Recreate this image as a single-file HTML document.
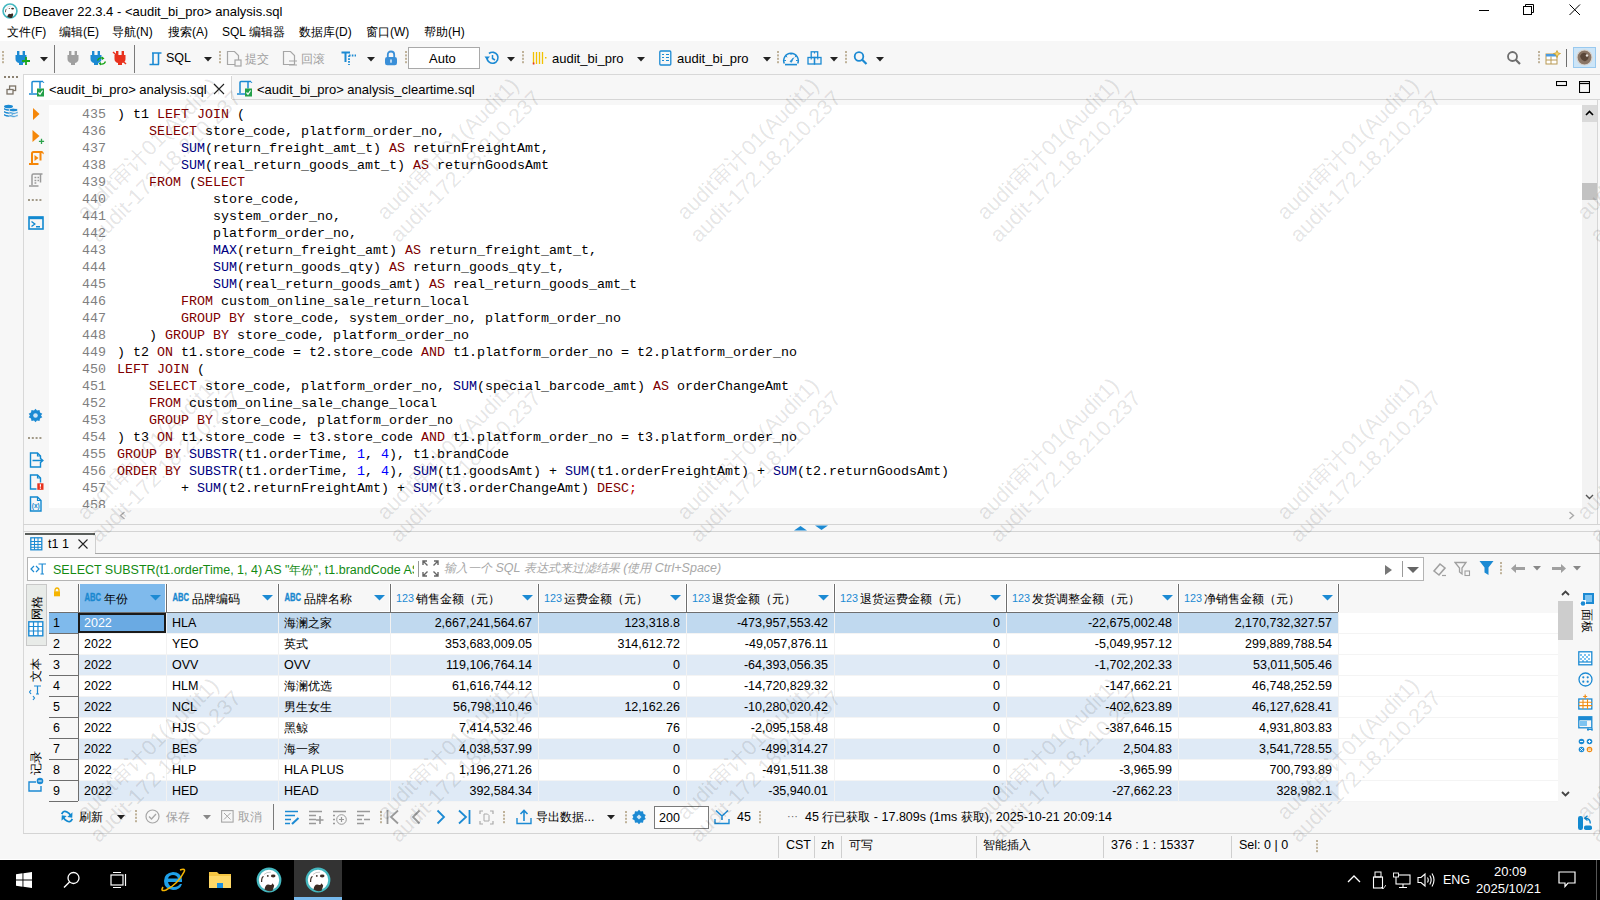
<!DOCTYPE html>
<html><head><meta charset="utf-8">
<style>
*{box-sizing:border-box}
html,body{margin:0;padding:0;width:1600px;height:900px;overflow:hidden;background:#f7f7f7;font-family:"Liberation Sans",sans-serif;font-size:12.5px;color:#000}
.a{position:absolute}
.t{position:absolute;white-space:nowrap;line-height:1}
.code{font-family:"Liberation Mono",monospace;font-size:13.33px;line-height:17px;white-space:pre;position:absolute}
.k{color:#800000}
.f{color:#000080}
.n{color:#0000ff}
</style></head><body>

<svg width="0" height="0" style="position:absolute"><defs>
<symbol id="plug" viewBox="0 0 16 16"><rect x="4" y="1" width="2.4" height="4"/><rect x="9.6" y="1" width="2.4" height="4"/><path d="M2.5 5H13.5V9Q13.5 12 10 13V15H6V13Q2.5 12 2.5 9Z"/></symbol>
<symbol id="doc" viewBox="0 0 16 16"><path d="M2.5 1.5H9.5L13.5 5.5V14.5H2.5Z" fill="none" stroke-width="1.2"/></symbol>
</defs></svg>
<div class="a" style="left:0px;top:0px;width:1600px;height:41px;background:#fff;"></div>
<svg class="a" style="left:2px;top:3px;" width="16" height="16" viewBox="0 0 16 16"><g transform="scale(0.6153846153846154)"><circle cx="13" cy="13" r="11.3" fill="#fff" stroke="#45b8c0" stroke-width="2.6"/><path d="M8.5 22.5Q9.5 16.5 13.5 17.8Q15.5 18.8 16.5 16.2L18.2 18.5Q17.5 21.5 16.5 23.8Q12.5 25.2 8.5 22.5Z" fill="#3a2a22"/><ellipse cx="17.2" cy="9" rx="2.3" ry="1.4" fill="#3a2a22"/><circle cx="11.8" cy="8.9" r="0.9" fill="#3a2a22"/><path d="M5.6 15Q5.5 10 7.6 9.5" fill="none" stroke="#3a2a22" stroke-width="1.2"/><path d="M8 7.5Q10.5 4.8 15 5.2" fill="none" stroke="#bbb" stroke-width="0.8"/></g></svg>
<div class="t" style="left:23px;top:5.00px;font-size:13px;color:#000;">DBeaver 22.3.4 - &lt;audit_bi_pro&gt; analysis.sql</div>
<svg class="a" style="left:1478px;top:4px;" width="12" height="12" viewBox="0 0 12 12"><path d="M1 6.5H11" stroke="#000" stroke-width="1"/></svg>
<svg class="a" style="left:1523px;top:4px;" width="12" height="12" viewBox="0 0 12 12"><rect x="0.5" y="2.5" width="8" height="8" fill="none" stroke="#000"/><path d="M2.5 2.5V0.5H10.5V8.5H8.5" fill="none" stroke="#000"/></svg>
<svg class="a" style="left:1569px;top:4px;" width="12" height="12" viewBox="0 0 12 12"><path d="M0.5 0.5L11 11M11 0.5L0.5 11" stroke="#000" stroke-width="1"/></svg>
<div class="t" style="left:7px;top:26.34px;font-size:12px;color:#000;">文件(F)</div>
<div class="t" style="left:59px;top:26.34px;font-size:12px;color:#000;">编辑(E)</div>
<div class="t" style="left:112px;top:26.34px;font-size:12px;color:#000;">导航(N)</div>
<div class="t" style="left:168px;top:26.34px;font-size:12px;color:#000;">搜索(A)</div>
<div class="t" style="left:222px;top:26.34px;font-size:12px;color:#000;">SQL 编辑器</div>
<div class="t" style="left:299px;top:26.34px;font-size:12px;color:#000;">数据库(D)</div>
<div class="t" style="left:366px;top:26.34px;font-size:12px;color:#000;">窗口(W)</div>
<div class="t" style="left:424px;top:26.34px;font-size:12px;color:#000;">帮助(H)</div>
<div class="a" style="left:0px;top:41px;width:1600px;height:33px;background:#f7f7f7;"></div>
<div class="a" style="left:23px;top:74px;width:1577px;height:1px;background:#d8d8d8;"></div>
<svg class="a" style="left:2px;top:51px;" width="2" height="14" viewBox="0 0 2 14"><rect x="0" y="0.0" width="2" height="2" fill="#bfb29a"/><rect x="0" y="3.4" width="2" height="2" fill="#bfb29a"/><rect x="0" y="6.8" width="2" height="2" fill="#bfb29a"/><rect x="0" y="10.2" width="2" height="2" fill="#bfb29a"/></svg>
<svg class="a" style="left:13px;top:50px;" width="16" height="16"><use href="#plug" fill="#1c8ad3"/></svg>
<svg class="a" style="left:21px;top:56px;" width="10" height="10" viewBox="0 0 10 10"><path d="M5 1V9M1 5H9" stroke="#1aa51a" stroke-width="1.8"/></svg>
<svg class="a" style="left:40px;top:57px;" width="8" height="5" viewBox="0 0 8 5"><path d="M0 0H8L4 4.5Z" fill="#222"/></svg>
<div class="a" style="left:54px;top:45px;width:1px;height:28px;background:#7a7a7a;"></div>
<svg class="a" style="left:65px;top:50px;" width="16" height="16"><use href="#plug" fill="#a0a0a0"/></svg>
<svg class="a" style="left:88px;top:50px;" width="16" height="16"><use href="#plug" fill="#1c8ad3"/></svg>
<svg class="a" style="left:96px;top:56px;" width="11" height="10" viewBox="0 0 11 10"><path d="M1.5 4.5Q3 1 7 2.2M9.5 5.5Q8 9 4 7.8" fill="none" stroke="#1aa51a" stroke-width="1.4"/><path d="M6 0.5L8.5 2.5L6 4Z M5 6L2.5 7.5L5 9.5Z" fill="#1aa51a"/></svg>
<svg class="a" style="left:112px;top:50px;" width="16" height="16"><use href="#plug" fill="#e8321e"/></svg>
<svg class="a" style="left:112px;top:51px;" width="15" height="14" viewBox="0 0 15 14"><path d="M1 1L14 13" stroke="#e8321e" stroke-width="1.4"/></svg>
<div class="a" style="left:134px;top:45px;width:1px;height:28px;background:#7a7a7a;"></div>
<svg class="a" style="left:148px;top:51px;" width="15" height="15" viewBox="0 0 15 15"><path d="M4 2H13.5M5 2V13.5M10.5 2V13.5M1.5 13.5H11" fill="none" stroke="#1c8ad3" stroke-width="1.6"/></svg>
<div class="t" style="left:166px;top:52.42px;font-size:12.5px;color:#000;">SQL</div>
<svg class="a" style="left:204px;top:57px;" width="8" height="5" viewBox="0 0 8 5"><path d="M0 0H8L4 4.5Z" fill="#222"/></svg>
<svg class="a" style="left:219px;top:51px;" width="2" height="14" viewBox="0 0 2 14"><rect x="0" y="0.0" width="2" height="2" fill="#bfb29a"/><rect x="0" y="3.4" width="2" height="2" fill="#bfb29a"/><rect x="0" y="6.8" width="2" height="2" fill="#bfb29a"/><rect x="0" y="10.2" width="2" height="2" fill="#bfb29a"/></svg>
<svg class="a" style="left:225px;top:50px;stroke:#a6a6a6" width="16" height="16"><use href="#doc"/></svg>
<svg class="a" style="left:234px;top:59px;" width="8" height="8" viewBox="0 0 8 8"><rect x="1" y="1" width="6" height="6" fill="#f7f7f7" stroke="#a6a6a6" stroke-width="1.2"/></svg>
<div class="t" style="left:245px;top:52.84px;font-size:12px;color:#a0a0a0;">提交</div>
<svg class="a" style="left:281px;top:50px;stroke:#a6a6a6" width="16" height="16"><use href="#doc"/></svg>
<svg class="a" style="left:288px;top:59px;" width="10" height="8" viewBox="0 0 10 8"><path d="M1 2H9M1 6H9" stroke="#a6a6a6" stroke-width="1.2"/></svg>
<div class="t" style="left:301px;top:52.84px;font-size:12px;color:#a0a0a0;">回滚</div>
<svg class="a" style="left:341px;top:51px;" width="16" height="15" viewBox="0 0 16 15"><path d="M0.5 1.5H9M4.5 1.5V11" stroke="#1c8ad3" stroke-width="2"/><path d="M8 4.5H15M8 4.5V14" stroke="#1c8ad3" stroke-width="1.8" stroke-dasharray="1.6 1.2"/></svg>
<svg class="a" style="left:367px;top:57px;" width="8" height="5" viewBox="0 0 8 5"><path d="M0 0H8L4 4.5Z" fill="#222"/></svg>
<svg class="a" style="left:384px;top:50px;" width="14" height="16" viewBox="0 0 14 16"><path d="M3.8 7.5V4.8Q3.8 1.5 7 1.5Q10.2 1.5 10.2 4.8V7.5" fill="none" stroke="#3a8fd8" stroke-width="1.8"/><rect x="1" y="7" width="12" height="8.2" rx="2.2" fill="#3a8fd8"/><rect x="6.2" y="9.5" width="1.6" height="3.2" fill="#d8eaf8"/></svg>
<svg class="a" style="left:405px;top:51px;" width="2" height="14" viewBox="0 0 2 14"><rect x="0" y="0.0" width="2" height="2" fill="#bfb29a"/><rect x="0" y="3.4" width="2" height="2" fill="#bfb29a"/><rect x="0" y="6.8" width="2" height="2" fill="#bfb29a"/><rect x="0" y="10.2" width="2" height="2" fill="#bfb29a"/></svg>
<div class="a" style="left:408px;top:47px;width:72px;height:22px;background:#fff;border:1px solid #a9a9a9"></div>
<div class="t" style="left:429px;top:52.00px;font-size:13px;color:#000;">Auto</div>
<svg class="a" style="left:484px;top:50px;" width="17" height="16" viewBox="0 0 17 16"><path d="M3 8A5.5 5.5 0 1 0 5 3.5" fill="none" stroke="#1c8ad3" stroke-width="1.7"/><path d="M0.5 6.5L3 10L6 6.5Z" fill="#1c8ad3"/><path d="M8.5 5V8.5L11 10" fill="none" stroke="#1c8ad3" stroke-width="1.5"/></svg>
<svg class="a" style="left:507px;top:57px;" width="8" height="5" viewBox="0 0 8 5"><path d="M0 0H8L4 4.5Z" fill="#222"/></svg>
<svg class="a" style="left:522px;top:51px;" width="2" height="14" viewBox="0 0 2 14"><rect x="0" y="0.0" width="2" height="2" fill="#bfb29a"/><rect x="0" y="3.4" width="2" height="2" fill="#bfb29a"/><rect x="0" y="6.8" width="2" height="2" fill="#bfb29a"/><rect x="0" y="10.2" width="2" height="2" fill="#bfb29a"/></svg>
<svg class="a" style="left:532px;top:50px;" width="16" height="16" viewBox="0 0 16 16"><path d="M1.5 2V14M4.5 2V14M7.5 2V14M10.5 2V14" stroke="#f2c200" stroke-width="1.3"/><rect x="0.8" y="12.5" width="1.6" height="2" fill="#e83020"/><rect x="13" y="7" width="1.5" height="1.5" fill="#f2c200"/></svg>
<div class="t" style="left:552px;top:52.00px;font-size:13px;color:#000;">audit_bi_pro</div>
<svg class="a" style="left:637px;top:57px;" width="8" height="5" viewBox="0 0 8 5"><path d="M0 0H8L4 4.5Z" fill="#222"/></svg>
<svg class="a" style="left:659px;top:50px;" width="13" height="16" viewBox="0 0 13 16"><rect x="0.8" y="1" width="11" height="14" rx="1" fill="none" stroke="#1c8ad3" stroke-width="1.3"/><path d="M3 4.5H5M7 4.5H10M3 7.5H5M7 7.5H10M3 10.5H5M7 10.5H10" stroke="#1c8ad3" stroke-width="1.2"/></svg>
<div class="t" style="left:677px;top:52.00px;font-size:13px;color:#000;">audit_bi_pro</div>
<svg class="a" style="left:763px;top:57px;" width="8" height="5" viewBox="0 0 8 5"><path d="M0 0H8L4 4.5Z" fill="#222"/></svg>
<svg class="a" style="left:777px;top:51px;" width="2" height="14" viewBox="0 0 2 14"><rect x="0" y="0.0" width="2" height="2" fill="#bfb29a"/><rect x="0" y="3.4" width="2" height="2" fill="#bfb29a"/><rect x="0" y="6.8" width="2" height="2" fill="#bfb29a"/><rect x="0" y="10.2" width="2" height="2" fill="#bfb29a"/></svg>
<svg class="a" style="left:782px;top:51px;" width="18" height="15" viewBox="0 0 18 15"><path d="M2.3 12.5A7.3 7.3 0 1 1 15.7 12.5" fill="none" stroke="#1c8ad3" stroke-width="1.5"/><path d="M3 13.6H15" stroke="#1c8ad3" stroke-width="1.6"/><path d="M9 2V4M3.8 5L5.2 6.2M14.2 5L12.8 6.2M2.2 9.5H4M14 9.5H15.8" stroke="#1c8ad3" stroke-width="1"/><path d="M8 10.5L11.5 6.8L9.5 11.2Z" fill="#1c8ad3" stroke="#1c8ad3" stroke-width="0.8"/></svg>
<svg class="a" style="left:807px;top:51px;" width="15" height="14" viewBox="0 0 15 14"><rect x="4.2" y="0.8" width="6.5" height="5.7" fill="none" stroke="#1c8ad3" stroke-width="1.3"/><rect x="1" y="6.5" width="6.5" height="6.5" fill="none" stroke="#1c8ad3" stroke-width="1.3"/><rect x="7.5" y="6.5" width="6.5" height="6.5" fill="none" stroke="#1c8ad3" stroke-width="1.3"/><path d="M7.5 1V2.5M4.2 7V8.5M10.8 7V8.5" stroke="#1c8ad3" stroke-width="1.1"/></svg>
<svg class="a" style="left:830px;top:57px;" width="8" height="5" viewBox="0 0 8 5"><path d="M0 0H8L4 4.5Z" fill="#222"/></svg>
<svg class="a" style="left:845px;top:51px;" width="2" height="14" viewBox="0 0 2 14"><rect x="0" y="0.0" width="2" height="2" fill="#bfb29a"/><rect x="0" y="3.4" width="2" height="2" fill="#bfb29a"/><rect x="0" y="6.8" width="2" height="2" fill="#bfb29a"/><rect x="0" y="10.2" width="2" height="2" fill="#bfb29a"/></svg>
<svg class="a" style="left:853px;top:50px;" width="15" height="16" viewBox="0 0 15 16"><circle cx="6" cy="6.5" r="4.3" fill="none" stroke="#1c8ad3" stroke-width="1.8"/><path d="M9 9.5L13.5 14" stroke="#1c8ad3" stroke-width="2.2"/></svg>
<svg class="a" style="left:876px;top:57px;" width="8" height="5" viewBox="0 0 8 5"><path d="M0 0H8L4 4.5Z" fill="#222"/></svg>
<svg class="a" style="left:1506px;top:50px;" width="16" height="16" viewBox="0 0 16 16"><circle cx="6.5" cy="6.5" r="4.5" fill="none" stroke="#6e6e6e" stroke-width="1.8"/><path d="M9.5 9.5L14 14" stroke="#6e6e6e" stroke-width="2.2"/></svg>
<svg class="a" style="left:1538px;top:51px;" width="2" height="14" viewBox="0 0 2 14"><rect x="0" y="0.0" width="2" height="2" fill="#bfb29a"/><rect x="0" y="3.4" width="2" height="2" fill="#bfb29a"/><rect x="0" y="6.8" width="2" height="2" fill="#bfb29a"/><rect x="0" y="10.2" width="2" height="2" fill="#bfb29a"/></svg>
<svg class="a" style="left:1545px;top:50px;" width="16" height="16" viewBox="0 0 16 16"><rect x="1" y="4" width="11" height="10" fill="#fff" stroke="#b99a54" stroke-width="1"/><rect x="1" y="4" width="11" height="2.5" fill="#4b9be0"/><path d="M6 6.5V14M1 10H12" stroke="#b99a54"/><path d="M12 0.5L13.2 3L15.5 3.5L13.2 4.8L12 7.5L10.8 4.8L8.5 3.5L10.8 3Z" fill="#f5d26a" stroke="#c49a22" stroke-width="0.7"/></svg>
<div class="a" style="left:1566px;top:49px;width:1px;height:18px;background:#6e6e6e;"></div>
<div class="a" style="left:1573px;top:47px;width:23px;height:21px;background:#cde5f7;border:1px solid #99c9ef"></div>
<svg class="a" style="left:1576px;top:49px;" width="17" height="17" viewBox="0 0 17 17"><circle cx="8.5" cy="8.5" r="7.5" fill="#8a7565"/><circle cx="8.5" cy="8.5" r="7.5" fill="none" stroke="#d9d2cc" stroke-width="1.2"/><path d="M4 7Q6 3 9 4Q13 5 12.5 9Q11 13 8 12Q5 11 4 7Z" fill="#5a4638"/><circle cx="11" cy="6.5" r="1.2" fill="#e8e0da"/></svg>
<div class="a" style="left:23px;top:75px;width:1577px;height:24px;background:#f7f7f7;"></div>
<div class="a" style="left:23px;top:99px;width:1577px;height:1px;background:#d6d6d6;"></div>
<div class="a" style="left:24px;top:75px;width:208px;height:25px;background:#ffffff;"></div>
<div class="a" style="left:231px;top:76px;width:1px;height:23px;background:#d6d6d6;"></div>
<svg class="a" style="left:28px;top:80px;" width="17" height="17" viewBox="0 0 17 17"><path d="M4 13V2.5Q4 1.5 5 1.5H15M1 14H10M12 1.5V8.5" fill="none" stroke="#1c8ad3" stroke-width="1.5"/><path d="M15 1.5Q16 2 15.5 3" fill="none" stroke="#1c8ad3" stroke-width="1"/><rect x="9" y="8.5" width="7" height="8" fill="#23a048"/><path d="M10.5 12.5L12 14.3L14.6 10.5" fill="none" stroke="#fff" stroke-width="1.2"/></svg>
<div class="t" style="left:49px;top:82.50px;font-size:13px;color:#000;">&lt;audit_bi_pro&gt; analysis.sql</div>
<svg class="a" style="left:213px;top:83px;" width="12" height="12" viewBox="0 0 12 12"><path d="M1 1L11 11M11 1L1 11" stroke="#222" stroke-width="1.1"/></svg>
<svg class="a" style="left:236px;top:80px;" width="17" height="17" viewBox="0 0 17 17"><path d="M4 13V2.5Q4 1.5 5 1.5H15M1 14H10M12 1.5V8.5" fill="none" stroke="#1c8ad3" stroke-width="1.5"/><path d="M15 1.5Q16 2 15.5 3" fill="none" stroke="#1c8ad3" stroke-width="1"/><rect x="9" y="8.5" width="7" height="8" fill="#23a048"/><path d="M10.5 12.5L12 14.3L14.6 10.5" fill="none" stroke="#fff" stroke-width="1.2"/></svg>
<div class="t" style="left:257px;top:82.50px;font-size:13px;color:#000;">&lt;audit_bi_pro&gt; analysis_cleartime.sql</div>
<svg class="a" style="left:1556px;top:81px;" width="11" height="6" viewBox="0 0 11 6"><rect x="0.5" y="0.5" width="10" height="4" fill="none" stroke="#000" stroke-width="1.1"/></svg>
<svg class="a" style="left:1579px;top:81px;" width="11" height="12" viewBox="0 0 11 12"><rect x="0.5" y="0.5" width="10" height="11" fill="none" stroke="#000" stroke-width="1.1"/><path d="M0.5 2.5H10.5" stroke="#000" stroke-width="1.2"/></svg>
<div class="a" style="left:0px;top:75px;width:23px;height:784px;background:#f7f7f7;"></div>
<div class="a" style="left:23px;top:74px;width:1px;height:760px;background:#d8d8d8;"></div>
<svg class="a" style="left:4px;top:76px;" width="16" height="3" viewBox="0 0 16 3"><rect x="0" y="0" width="2" height="2" fill="#8a8070"/><rect x="4" y="0" width="2" height="2" fill="#8a8070"/><rect x="8" y="0" width="2" height="2" fill="#8a8070"/><rect x="12" y="0" width="2" height="2" fill="#8a8070"/></svg>
<svg class="a" style="left:6px;top:85px;" width="11" height="10" viewBox="0 0 11 10"><rect x="3.6" y="1" width="6" height="4.5" fill="none" stroke="#7d7468" stroke-width="1.3"/><rect x="1" y="4.5" width="6" height="4.5" fill="#f7f7f7" stroke="#7d7468" stroke-width="1.3"/></svg>
<svg class="a" style="left:3px;top:104px;" width="16" height="16" viewBox="0 0 16 16"><ellipse cx="5.5" cy="2.5" rx="4.5" ry="1.8" fill="#1c8ad3"/><path d="M1 4V5.5Q5.5 8 10 5.5V4Q5.5 6.5 1 4ZM1 7V8.5Q5.5 11 10 8.5V7Q5.5 9.5 1 7ZM1 10V11.5Q5.5 14 10 11.5V10Q5.5 12.5 1 10Z" fill="#1c8ad3"/><ellipse cx="10.5" cy="6" rx="4.5" ry="1.8" fill="#1c8ad3" stroke="#f7f7f7" stroke-width="0.8"/><path d="M6 7.5V9Q10.5 11.5 15 9V7.5Q10.5 10 6 7.5ZM6 10.5V12Q10.5 14.5 15 12V10.5Q10.5 13 6 10.5Z" fill="#1c8ad3" stroke="#f7f7f7" stroke-width="0.6"/></svg>
<div class="a" style="left:24px;top:100px;width:1574px;height:424px;background:#f7f7f7;"></div>
<div class="a" style="left:49px;top:105px;width:1533px;height:403px;background:#fff;"></div>
<svg class="a" style="left:32px;top:107px;" width="9" height="14" viewBox="0 0 9 14"><path d="M1 1L7.5 7L1 13Z" fill="#f5870a"/></svg>
<svg class="a" style="left:31px;top:129px;" width="14" height="16" viewBox="0 0 14 16"><path d="M1.5 1L8.5 7L1.5 13Z" fill="#f5870a"/><path d="M10.5 9.8V15M7.9 12.4H13.1" stroke="#2aa24a" stroke-width="1.3"/></svg>
<svg class="a" style="left:28px;top:150px;" width="16" height="16" viewBox="0 0 16 16"><path d="M4 13V3.5Q4 2 5.5 2H14.5M1 14H10.5M12.5 2V10.5" fill="none" stroke="#f5870a" stroke-width="2"/><path d="M14 2Q15.5 2.5 15 4" fill="none" stroke="#f5870a" stroke-width="1.2"/><path d="M6.5 5L10.5 8L6.5 11Z" fill="#f5870a"/></svg>
<svg class="a" style="left:28px;top:172px;" width="16" height="16" viewBox="0 0 16 16"><path d="M4 13V3.5Q4 2 5.5 2H14.5M1 14H10.5M12.5 2V10.5" fill="none" stroke="#9a9a9a" stroke-width="1.5"/><path d="M6.5 5.5H8.3M9.5 5.5H11M6.5 8.5H8.3M9.5 8.5H11M6.5 11H8.3" stroke="#9a9a9a" stroke-width="1.3"/></svg>
<svg class="a" style="left:27px;top:199px;" width="17" height="3" viewBox="0 0 17 3"><rect x="1.0" y="0" width="2" height="2" fill="#a29a88"/><rect x="4.8" y="0" width="2" height="2" fill="#a29a88"/><rect x="8.6" y="0" width="2" height="2" fill="#a29a88"/><rect x="12.399999999999999" y="0" width="2" height="2" fill="#a29a88"/></svg>
<svg class="a" style="left:28px;top:216px;" width="16" height="14" viewBox="0 0 16 14"><rect x="1" y="1" width="14" height="12" fill="none" stroke="#1289d0" stroke-width="1.6"/><path d="M1 2H15" stroke="#1289d0" stroke-width="2.4"/><path d="M3.5 5.5L6.8 8L3.5 10.5M8 10.8H12" fill="none" stroke="#1289d0" stroke-width="1.4"/></svg>
<svg class="a" style="left:28px;top:408px;" width="15" height="15" viewBox="0 0 15 15"><path d="M7.5 0.8L9 2.5L11.5 2L12 4.5L14.3 5.8L13 7.5L14.3 9.2L12 10.5L11.5 13L9 12.5L7.5 14.2L6 12.5L3.5 13L3 10.5L0.7 9.2L2 7.5L0.7 5.8L3 4.5L3.5 2L6 2.5Z" fill="#1c8ad3"/><circle cx="7.5" cy="7.5" r="2.3" fill="#cfe6f7"/></svg>
<svg class="a" style="left:27px;top:437px;" width="17" height="3" viewBox="0 0 17 3"><rect x="1.0" y="0" width="2" height="2" fill="#a29a88"/><rect x="4.8" y="0" width="2" height="2" fill="#a29a88"/><rect x="8.6" y="0" width="2" height="2" fill="#a29a88"/><rect x="12.399999999999999" y="0" width="2" height="2" fill="#a29a88"/></svg>
<svg class="a" style="left:29px;top:452px;" width="15" height="16" viewBox="0 0 15 16"><path d="M11.5 6V4L8.5 1H1.5V15H11.5V11" fill="none" stroke="#1289d0" stroke-width="1.4"/><path d="M8.5 1V4H11.5" fill="none" stroke="#1289d0" stroke-width="1.2"/><path d="M3.5 8.5H13.8M11 6L13.8 8.5L11 11" fill="none" stroke="#1289d0" stroke-width="1.5"/></svg>
<svg class="a" style="left:29px;top:474px;" width="15" height="16" viewBox="0 0 15 16"><path d="M7.5 15H1.5V1H8.5L11.5 4V8.5" fill="none" stroke="#1289d0" stroke-width="1.4"/><path d="M8.5 1V4H11.5" fill="none" stroke="#1289d0" stroke-width="1.2"/><rect x="8.3" y="9.3" width="6.2" height="6.5" fill="#e8321e"/><path d="M11.4 10.3V12.8M11.4 13.6V14.8" stroke="#fff" stroke-width="1.2"/></svg>
<svg class="a" style="left:29px;top:496px;" width="15" height="16" viewBox="0 0 15 16"><path d="M1.5 1H8.5L12 4.5V15H1.5Z" fill="none" stroke="#1289d0" stroke-width="1.4"/><path d="M8.5 1V4.5H12" fill="none" stroke="#1289d0" stroke-width="1.2"/><text x="6.8" y="11.5" font-size="6.5" font-weight="bold" text-anchor="middle" fill="#1289d0" font-family="Liberation Sans">(x)</text></svg>
<div class="code" style="left:117px;top:106px;color:#000">) t1 <span class="k">LEFT</span> <span class="k">JOIN</span> (
    <span class="k">SELECT</span> store_code, platform_order_no,
        <span class="f">SUM</span>(return_freight_amt_t) <span class="k">AS</span> returnFreightAmt,
        <span class="f">SUM</span>(real_return_goods_amt_t) <span class="k">AS</span> returnGoodsAmt
    <span class="k">FROM</span> (<span class="k">SELECT</span>
            store_code,
            system_order_no,
            platform_order_no,
            <span class="f">MAX</span>(return_freight_amt) <span class="k">AS</span> return_freight_amt_t,
            <span class="f">SUM</span>(return_goods_qty) <span class="k">AS</span> return_goods_qty_t,
            <span class="f">SUM</span>(real_return_goods_amt) <span class="k">AS</span> real_return_goods_amt_t
        <span class="k">FROM</span> custom_online_sale_return_local
        <span class="k">GROUP</span> <span class="k">BY</span> store_code, system_order_no, platform_order_no
    ) <span class="k">GROUP</span> <span class="k">BY</span> store_code, platform_order_no
) t2 <span class="k">ON</span> t1.store_code = t2.store_code <span class="k">AND</span> t1.platform_order_no = t2.platform_order_no
<span class="k">LEFT</span> <span class="k">JOIN</span> (
    <span class="k">SELECT</span> store_code, platform_order_no, <span class="f">SUM</span>(special_barcode_amt) <span class="k">AS</span> orderChangeAmt
    <span class="k">FROM</span> custom_online_sale_change_local
    <span class="k">GROUP</span> <span class="k">BY</span> store_code, platform_order_no
) t3 <span class="k">ON</span> t1.store_code = t3.store_code <span class="k">AND</span> t1.platform_order_no = t3.platform_order_no
<span class="k">GROUP</span> <span class="k">BY</span> <span class="f">SUBSTR</span>(t1.orderTime, <span class="n">1</span>, <span class="n">4</span>), t1.brandCode
<span class="k">ORDER</span> <span class="k">BY</span> <span class="f">SUBSTR</span>(t1.orderTime, <span class="n">1</span>, <span class="n">4</span>), <span class="f">SUM</span>(t1.goodsAmt) + <span class="f">SUM</span>(t1.orderFreightAmt) + <span class="f">SUM</span>(t2.returnGoodsAmt)
        + <span class="f">SUM</span>(t2.returnFreightAmt) + <span class="f">SUM</span>(t3.orderChangeAmt) <span class="k">DESC</span><span class="k" style="font-weight:normal;color:#c00000">;</span></div>
<div class="code" style="left:82px;top:106px;color:#808080;height:405px;overflow:hidden">435
436
437
438
439
440
441
442
443
444
445
446
447
448
449
450
451
452
453
454
455
456
457
458</div>
<div class="a" style="left:1582px;top:105px;width:15px;height:403px;background:#f3f3f3;"></div>
<div class="a" style="left:1582px;top:105px;width:15px;height:17px;background:#dadada;"></div>
<svg class="a" style="left:1585px;top:110px;" width="9" height="6" viewBox="0 0 9 6"><path d="M1 5L4.5 1.5L8 5" fill="none" stroke="#000" stroke-width="1.6"/></svg>
<div class="a" style="left:1582px;top:183px;width:15px;height:17px;background:#c2c2c2;"></div>
<svg class="a" style="left:1585px;top:494px;" width="9" height="6" viewBox="0 0 9 6"><path d="M1 1L4.5 4.5L8 1" fill="none" stroke="#555" stroke-width="1.4"/></svg>
<div class="a" style="left:1597px;top:100px;width:1px;height:424px;background:#d6d6d6;"></div>
<div class="a" style="left:49px;top:508px;width:1533px;height:16px;background:#f7f7f7;"></div>
<svg class="a" style="left:119px;top:511px;" width="7" height="9" viewBox="0 0 7 9"><path d="M5.5 1L1.5 4.5L5.5 8" fill="none" stroke="#aaa" stroke-width="1.4"/></svg>
<svg class="a" style="left:1568px;top:511px;" width="7" height="9" viewBox="0 0 7 9"><path d="M1.5 1L5.5 4.5L1.5 8" fill="none" stroke="#aaa" stroke-width="1.4"/></svg>
<div class="a" style="left:23px;top:524px;width:1577px;height:1px;background:#d4d4d4;"></div>
<div class="a" style="left:23px;top:531px;width:1577px;height:1px;background:#d4d4d4;"></div>
<svg class="a" style="left:794px;top:526px;" width="13" height="5" viewBox="0 0 13 5"><path d="M0 4.5L6.5 0L13 4.5Z" fill="#1c8ad3"/></svg>
<svg class="a" style="left:815px;top:525px;" width="13" height="6" viewBox="0 0 13 6"><path d="M0 0.5H13L6.5 5Z" fill="#1c8ad3"/></svg>
<div class="a" style="left:24px;top:533px;width:1576px;height:300px;background:#f7f7f7;"></div>
<div class="a" style="left:23px;top:833px;width:1577px;height:1px;background:#d4d4d4;"></div>
<div class="a" style="left:1599px;top:531px;width:1px;height:302px;background:#d4d4d4;"></div>
<div class="a" style="left:25px;top:533px;width:70px;height:21px;background:#f7f7f7;"></div>
<div class="a" style="left:25px;top:533px;width:70px;height:2px;background:#5a5e5b;"></div>
<div class="a" style="left:95px;top:535px;width:1px;height:19px;background:#cfcfcf;"></div>
<div class="a" style="left:95px;top:553px;width:1505px;height:1px;background:#a8a8a8;"></div>
<svg class="a" style="left:30px;top:537px;" width="13" height="14" viewBox="0 0 13 14"><rect x="0.8" y="0.8" width="11" height="12" fill="none" stroke="#1c8ad3" stroke-width="1.3"/><path d="M0.8 4.5H11.8M0.8 7.5H11.8M0.8 10.3H11.8M4.5 0.8V12.8M8 0.8V12.8" stroke="#1c8ad3" stroke-width="1"/></svg>
<div class="t" style="left:48px;top:538.42px;font-size:12.5px;color:#000;">t1 1</div>
<svg class="a" style="left:78px;top:539px;" width="10" height="10" viewBox="0 0 10 10"><path d="M0.5 0.5L9.5 9.5M9.5 0.5L0.5 9.5" stroke="#222" stroke-width="1.1"/></svg>
<div class="a" style="left:27px;top:557px;width:1397px;height:24px;background:#fff;border:1px solid #b4b4b4"></div>
<svg class="a" style="left:30px;top:563px;" width="17" height="12" viewBox="0 0 17 12"><path d="M4 3L1 6L4 9M6 3L9 6L6 9" fill="none" stroke="#1c8ad3" stroke-width="1.2"/><path d="M8.5 1H16M12.2 1V11M10.5 11H14" stroke="#1c8ad3" stroke-width="1.2"/></svg>
<div class="a" style="left:52px;top:559px;width:362px;height:20px;overflow:hidden">
<div class="t" style="left:1px;top:4.92px;font-size:12.5px;color:#138a13;">SELECT SUBSTR(t1.orderTime, 1, 4) AS &quot;<span style="font-size:12px">年份</span>&quot;, t1.brandCode AS &quot;<span style="font-size:12px">品牌编码</span>&quot;</div>
</div>
<div class="a" style="left:418px;top:561px;width:1px;height:16px;background:#9a9a9a;"></div>
<svg class="a" style="left:422px;top:560px;" width="17" height="17" viewBox="0 0 17 17"><path d="M1 5V1H5M12 1H16V5M16 12V16H12M5 16H1V12M1 1L5.5 5.5M16 1L11.5 5.5M16 16L11.5 11.5M1 16L5.5 11.5" fill="none" stroke="#666" stroke-width="1.4"/></svg>
<div class="t" style="left:444px;top:562.42px;font-size:12.5px;color:#a8a8a8;font-style:italic"><span style="font-size:12px">输入一个</span> SQL <span style="font-size:12px">表达式来过滤结果</span> (<span style="font-size:12px">使用</span> Ctrl+Space)</div>
<svg class="a" style="left:1384px;top:564px;" width="9" height="12" viewBox="0 0 9 12"><path d="M1 1L8 6L1 11Z" fill="#777"/></svg>
<div class="a" style="left:1402px;top:561px;width:1px;height:16px;background:#9a9a9a;"></div>
<svg class="a" style="left:1407px;top:567px;" width="12" height="6" viewBox="0 0 12 6"><path d="M0 0H12L6 6Z" fill="#666"/></svg>
<svg class="a" style="left:1432px;top:561px;" width="16" height="16" viewBox="0 0 16 16"><path d="M2 10L8 3L13 7L7 14Z" fill="none" stroke="#a0a0a0" stroke-width="1.6"/><path d="M10 14.5H14" stroke="#a0a0a0" stroke-width="1.2"/></svg>
<svg class="a" style="left:1454px;top:561px;" width="17" height="16" viewBox="0 0 17 16"><path d="M1 1.5H12L8 7V13L5.5 11V7Z" fill="none" stroke="#a0a0a0" stroke-width="1.3"/><rect x="11" y="10" width="4.5" height="4.5" fill="none" stroke="#a0a0a0" stroke-width="1.1"/></svg>
<svg class="a" style="left:1479px;top:560px;" width="15" height="16" viewBox="0 0 15 16"><path d="M0.5 1H14.5L9.5 7.5V15L5.5 12.5V7.5Z" fill="#1c8ad3"/></svg>
<svg class="a" style="left:1500px;top:562px;" width="2" height="14" viewBox="0 0 2 14"><rect x="0" y="0.0" width="2" height="2" fill="#bfb29a"/><rect x="0" y="3.4" width="2" height="2" fill="#bfb29a"/><rect x="0" y="6.8" width="2" height="2" fill="#bfb29a"/><rect x="0" y="10.2" width="2" height="2" fill="#bfb29a"/></svg>
<svg class="a" style="left:1510px;top:563px;" width="16" height="11" viewBox="0 0 16 11"><path d="M1 5.5L6 1V4H15V7H6V10Z" fill="#a0a0a0"/></svg>
<svg class="a" style="left:1533px;top:566px;" width="8" height="5" viewBox="0 0 8 5"><path d="M0 0H8L4 4.5Z" fill="#888"/></svg>
<svg class="a" style="left:1551px;top:563px;" width="16" height="11" viewBox="0 0 16 11"><path d="M15 5.5L10 1V4H1V7H10V10Z" fill="#a0a0a0"/></svg>
<svg class="a" style="left:1573px;top:566px;" width="8" height="5" viewBox="0 0 8 5"><path d="M0 0H8L4 4.5Z" fill="#888"/></svg>
<div class="a" style="left:26px;top:584px;width:21px;height:62px;background:#e8ebe8;border:1px solid #c8c8c8"></div>
<div class="t" style="left:25px;top:602px;width:24px;font-size:12px;transform:rotate(-90deg);text-align:center">网格</div>
<svg class="a" style="left:28px;top:621px;" width="16" height="16" viewBox="0 0 16 16"><rect x="0.8" y="0.8" width="14" height="14" fill="#fff" stroke="#1c8ad3" stroke-width="1.4"/><path d="M0.8 5.5H14.8M0.8 10H14.8M5.5 0.8V14.8M10 0.8V14.8" stroke="#1c8ad3" stroke-width="1.2"/></svg>
<div class="t" style="left:24px;top:664px;width:24px;font-size:12px;transform:rotate(-90deg);text-align:center">文本</div>
<svg class="a" style="left:29px;top:684px;" width="14" height="17" viewBox="0 0 14 17"><path d="M5 2H12M8.5 2V10M7 10H10" stroke="#1c8ad3" stroke-width="1.2" fill="none"/><path d="M2 6L0.5 8L2 10M4 12L5.5 14L4 16" fill="none" stroke="#1c8ad3" stroke-width="1.2"/></svg>
<div class="t" style="left:24px;top:757px;width:24px;font-size:12px;transform:rotate(-90deg);text-align:center">记录</div>
<svg class="a" style="left:28px;top:777px;" width="16" height="16" viewBox="0 0 16 16"><path d="M8 5H1V14H13V9" fill="none" stroke="#1c8ad3" stroke-width="1.4"/><circle cx="12" cy="4" r="3.3" fill="#1c8ad3"/><path d="M10.3 4H13.7" stroke="#fff" stroke-width="1"/></svg>
<div class="a" style="left:49px;top:584px;width:1509px;height:217px;background:#fff;"></div>
<div class="a" style="left:49px;top:584px;width:1509px;height:29px;background:#f7f7f7;"></div>
<div class="a" style="left:49px;top:611px;width:1289px;height:1px;background:#ffffff;"></div>
<div class="a" style="left:78px;top:584px;width:88px;height:28px;background:#7fbaec;"></div>
<div class="a" style="left:49px;top:612px;width:1289px;height:1px;background:#6e6e6e;"></div>
<div class="a" style="left:79px;top:584px;width:1px;height:28px;background:#ffffff;"></div>
<div class="a" style="left:78px;top:584px;width:1px;height:28px;background:#6e6e6e;"></div>
<div class="a" style="left:167px;top:584px;width:1px;height:28px;background:#ffffff;"></div>
<div class="a" style="left:165px;top:584px;width:1px;height:28px;background:#ffffff;"></div>
<div class="a" style="left:166px;top:584px;width:1px;height:28px;background:#6e6e6e;"></div>
<div class="a" style="left:279px;top:584px;width:1px;height:28px;background:#ffffff;"></div>
<div class="a" style="left:277px;top:584px;width:1px;height:28px;background:#ffffff;"></div>
<div class="a" style="left:278px;top:584px;width:1px;height:28px;background:#6e6e6e;"></div>
<div class="a" style="left:391px;top:584px;width:1px;height:28px;background:#ffffff;"></div>
<div class="a" style="left:389px;top:584px;width:1px;height:28px;background:#ffffff;"></div>
<div class="a" style="left:390px;top:584px;width:1px;height:28px;background:#6e6e6e;"></div>
<div class="a" style="left:539px;top:584px;width:1px;height:28px;background:#ffffff;"></div>
<div class="a" style="left:537px;top:584px;width:1px;height:28px;background:#ffffff;"></div>
<div class="a" style="left:538px;top:584px;width:1px;height:28px;background:#6e6e6e;"></div>
<div class="a" style="left:687px;top:584px;width:1px;height:28px;background:#ffffff;"></div>
<div class="a" style="left:685px;top:584px;width:1px;height:28px;background:#ffffff;"></div>
<div class="a" style="left:686px;top:584px;width:1px;height:28px;background:#6e6e6e;"></div>
<div class="a" style="left:835px;top:584px;width:1px;height:28px;background:#ffffff;"></div>
<div class="a" style="left:833px;top:584px;width:1px;height:28px;background:#ffffff;"></div>
<div class="a" style="left:834px;top:584px;width:1px;height:28px;background:#6e6e6e;"></div>
<div class="a" style="left:1007px;top:584px;width:1px;height:28px;background:#ffffff;"></div>
<div class="a" style="left:1005px;top:584px;width:1px;height:28px;background:#ffffff;"></div>
<div class="a" style="left:1006px;top:584px;width:1px;height:28px;background:#6e6e6e;"></div>
<div class="a" style="left:1179px;top:584px;width:1px;height:28px;background:#ffffff;"></div>
<div class="a" style="left:1177px;top:584px;width:1px;height:28px;background:#ffffff;"></div>
<div class="a" style="left:1178px;top:584px;width:1px;height:28px;background:#6e6e6e;"></div>
<div class="a" style="left:1339px;top:584px;width:1px;height:28px;background:#ffffff;"></div>
<div class="a" style="left:1337px;top:584px;width:1px;height:28px;background:#ffffff;"></div>
<div class="a" style="left:1338px;top:584px;width:1px;height:28px;background:#6e6e6e;"></div>
<svg class="a" style="left:53px;top:587px;" width="8" height="10" viewBox="0 0 8 10"><path d="M2 4.5V3.3Q2 1 4 1Q6 1 6 3.3V4.5" fill="none" stroke="#f5b400" stroke-width="1.3"/><rect x="1" y="4.3" width="6" height="5" fill="#f5b400"/></svg>
<svg class="a" style="left:84px;top:591px;" width="18" height="11" viewBox="0 0 18 11"><text x="0.5" y="9.5" font-family="Liberation Sans" font-size="10.5" font-weight="bold" fill="#1a88d0" stroke="#1a88d0" stroke-width="0.35" textLength="16.5" lengthAdjust="spacingAndGlyphs">ABC</text></svg>
<div class="t" style="left:104px;top:592.92px;font-size:12.5px;color:#000;"><span style="font-size:12px">年份</span></div>
<svg class="a" style="left:150px;top:595px;" width="11" height="6" viewBox="0 0 11 6"><path d="M0 0H11L5.5 5.5Z" fill="#1c8ad3"/></svg>
<svg class="a" style="left:172px;top:591px;" width="18" height="11" viewBox="0 0 18 11"><text x="0.5" y="9.5" font-family="Liberation Sans" font-size="10.5" font-weight="bold" fill="#1a88d0" stroke="#1a88d0" stroke-width="0.35" textLength="16.5" lengthAdjust="spacingAndGlyphs">ABC</text></svg>
<div class="t" style="left:192px;top:592.92px;font-size:12.5px;color:#000;"><span style="font-size:12px">品牌编码</span></div>
<svg class="a" style="left:262px;top:595px;" width="11" height="6" viewBox="0 0 11 6"><path d="M0 0H11L5.5 5.5Z" fill="#1c8ad3"/></svg>
<svg class="a" style="left:284px;top:591px;" width="18" height="11" viewBox="0 0 18 11"><text x="0.5" y="9.5" font-family="Liberation Sans" font-size="10.5" font-weight="bold" fill="#1a88d0" stroke="#1a88d0" stroke-width="0.35" textLength="16.5" lengthAdjust="spacingAndGlyphs">ABC</text></svg>
<div class="t" style="left:304px;top:592.92px;font-size:12.5px;color:#000;"><span style="font-size:12px">品牌名称</span></div>
<svg class="a" style="left:374px;top:595px;" width="11" height="6" viewBox="0 0 11 6"><path d="M0 0H11L5.5 5.5Z" fill="#1c8ad3"/></svg>
<div class="t" style="left:396px;top:592.86px;font-size:10.8px;color:#1c8ad3;">123</div>
<div class="t" style="left:416px;top:592.92px;font-size:12.5px;color:#000;"><span style="font-size:12px">销售金额（元）</span></div>
<svg class="a" style="left:522px;top:595px;" width="11" height="6" viewBox="0 0 11 6"><path d="M0 0H11L5.5 5.5Z" fill="#1c8ad3"/></svg>
<div class="t" style="left:544px;top:592.86px;font-size:10.8px;color:#1c8ad3;">123</div>
<div class="t" style="left:564px;top:592.92px;font-size:12.5px;color:#000;"><span style="font-size:12px">运费金额（元）</span></div>
<svg class="a" style="left:670px;top:595px;" width="11" height="6" viewBox="0 0 11 6"><path d="M0 0H11L5.5 5.5Z" fill="#1c8ad3"/></svg>
<div class="t" style="left:692px;top:592.86px;font-size:10.8px;color:#1c8ad3;">123</div>
<div class="t" style="left:712px;top:592.92px;font-size:12.5px;color:#000;"><span style="font-size:12px">退货金额（元）</span></div>
<svg class="a" style="left:818px;top:595px;" width="11" height="6" viewBox="0 0 11 6"><path d="M0 0H11L5.5 5.5Z" fill="#1c8ad3"/></svg>
<div class="t" style="left:840px;top:592.86px;font-size:10.8px;color:#1c8ad3;">123</div>
<div class="t" style="left:860px;top:592.92px;font-size:12.5px;color:#000;"><span style="font-size:12px">退货运费金额（元）</span></div>
<svg class="a" style="left:990px;top:595px;" width="11" height="6" viewBox="0 0 11 6"><path d="M0 0H11L5.5 5.5Z" fill="#1c8ad3"/></svg>
<div class="t" style="left:1012px;top:592.86px;font-size:10.8px;color:#1c8ad3;">123</div>
<div class="t" style="left:1032px;top:592.92px;font-size:12.5px;color:#000;"><span style="font-size:12px">发货调整金额（元）</span></div>
<svg class="a" style="left:1162px;top:595px;" width="11" height="6" viewBox="0 0 11 6"><path d="M0 0H11L5.5 5.5Z" fill="#1c8ad3"/></svg>
<div class="t" style="left:1184px;top:592.86px;font-size:10.8px;color:#1c8ad3;">123</div>
<div class="t" style="left:1204px;top:592.92px;font-size:12.5px;color:#000;"><span style="font-size:12px">净销售金额（元）</span></div>
<svg class="a" style="left:1322px;top:595px;" width="11" height="6" viewBox="0 0 11 6"><path d="M0 0H11L5.5 5.5Z" fill="#1c8ad3"/></svg>
<div class="a" style="left:78px;top:613px;width:1260px;height:20px;background:#c0d9ef;"></div>
<div class="a" style="left:49px;top:613px;width:29px;height:20px;background:#7fbaec;"></div>
<div class="a" style="left:49px;top:633px;width:29px;height:1px;background:#6e6e6e;"></div>
<div class="a" style="left:78px;top:633px;width:1480px;height:1px;background:#f4f4f4;"></div>
<div class="t" style="left:53px;top:616.92px;font-size:12.5px;color:#000;">1</div>
<div class="t" style="left:84px;top:616.92px;font-size:12.5px;color:#000;">2022</div>
<div class="t" style="left:172px;top:616.92px;font-size:12.5px;color:#000;">HLA</div>
<div class="t" style="left:284px;top:616.92px;font-size:12.5px;color:#000;"><span style="font-size:12px">海澜之家</span></div>
<div class="t" style="right:1068px;top:616.92px;font-size:12.5px;color:#000;text-align:right;">2,667,241,564.67</div>
<div class="t" style="right:920px;top:616.92px;font-size:12.5px;color:#000;text-align:right;">123,318.8</div>
<div class="t" style="right:772px;top:616.92px;font-size:12.5px;color:#000;text-align:right;">-473,957,553.42</div>
<div class="t" style="right:600px;top:616.92px;font-size:12.5px;color:#000;text-align:right;">0</div>
<div class="t" style="right:428px;top:616.92px;font-size:12.5px;color:#000;text-align:right;">-22,675,002.48</div>
<div class="t" style="right:268px;top:616.92px;font-size:12.5px;color:#000;text-align:right;">2,170,732,327.57</div>
<div class="a" style="left:166px;top:613px;width:1px;height:21px;background:#f2f2f2;"></div>
<div class="a" style="left:278px;top:613px;width:1px;height:21px;background:#f2f2f2;"></div>
<div class="a" style="left:390px;top:613px;width:1px;height:21px;background:#f2f2f2;"></div>
<div class="a" style="left:538px;top:613px;width:1px;height:21px;background:#f2f2f2;"></div>
<div class="a" style="left:686px;top:613px;width:1px;height:21px;background:#f2f2f2;"></div>
<div class="a" style="left:834px;top:613px;width:1px;height:21px;background:#f2f2f2;"></div>
<div class="a" style="left:1006px;top:613px;width:1px;height:21px;background:#f2f2f2;"></div>
<div class="a" style="left:1178px;top:613px;width:1px;height:21px;background:#f2f2f2;"></div>
<div class="a" style="left:1338px;top:613px;width:1px;height:21px;background:#f2f2f2;"></div>
<div class="a" style="left:78px;top:634px;width:1260px;height:20px;background:#ffffff;"></div>
<div class="a" style="left:49px;top:634px;width:29px;height:20px;background:#f7f7f7;"></div>
<div class="a" style="left:49px;top:654px;width:29px;height:1px;background:#6e6e6e;"></div>
<div class="a" style="left:78px;top:654px;width:1480px;height:1px;background:#f4f4f4;"></div>
<div class="t" style="left:53px;top:637.92px;font-size:12.5px;color:#000;">2</div>
<div class="t" style="left:84px;top:637.92px;font-size:12.5px;color:#000;">2022</div>
<div class="t" style="left:172px;top:637.92px;font-size:12.5px;color:#000;">YEO</div>
<div class="t" style="left:284px;top:637.92px;font-size:12.5px;color:#000;"><span style="font-size:12px">英式</span></div>
<div class="t" style="right:1068px;top:637.92px;font-size:12.5px;color:#000;text-align:right;">353,683,009.05</div>
<div class="t" style="right:920px;top:637.92px;font-size:12.5px;color:#000;text-align:right;">314,612.72</div>
<div class="t" style="right:772px;top:637.92px;font-size:12.5px;color:#000;text-align:right;">-49,057,876.11</div>
<div class="t" style="right:600px;top:637.92px;font-size:12.5px;color:#000;text-align:right;">0</div>
<div class="t" style="right:428px;top:637.92px;font-size:12.5px;color:#000;text-align:right;">-5,049,957.12</div>
<div class="t" style="right:268px;top:637.92px;font-size:12.5px;color:#000;text-align:right;">299,889,788.54</div>
<div class="a" style="left:166px;top:634px;width:1px;height:21px;background:#f2f2f2;"></div>
<div class="a" style="left:278px;top:634px;width:1px;height:21px;background:#f2f2f2;"></div>
<div class="a" style="left:390px;top:634px;width:1px;height:21px;background:#f2f2f2;"></div>
<div class="a" style="left:538px;top:634px;width:1px;height:21px;background:#f2f2f2;"></div>
<div class="a" style="left:686px;top:634px;width:1px;height:21px;background:#f2f2f2;"></div>
<div class="a" style="left:834px;top:634px;width:1px;height:21px;background:#f2f2f2;"></div>
<div class="a" style="left:1006px;top:634px;width:1px;height:21px;background:#f2f2f2;"></div>
<div class="a" style="left:1178px;top:634px;width:1px;height:21px;background:#f2f2f2;"></div>
<div class="a" style="left:1338px;top:634px;width:1px;height:21px;background:#f2f2f2;"></div>
<div class="a" style="left:78px;top:655px;width:1260px;height:20px;background:#dfeaf6;"></div>
<div class="a" style="left:49px;top:655px;width:29px;height:20px;background:#f7f7f7;"></div>
<div class="a" style="left:49px;top:675px;width:29px;height:1px;background:#6e6e6e;"></div>
<div class="a" style="left:78px;top:675px;width:1480px;height:1px;background:#f4f4f4;"></div>
<div class="t" style="left:53px;top:658.92px;font-size:12.5px;color:#000;">3</div>
<div class="t" style="left:84px;top:658.92px;font-size:12.5px;color:#000;">2022</div>
<div class="t" style="left:172px;top:658.92px;font-size:12.5px;color:#000;">OVV</div>
<div class="t" style="left:284px;top:658.92px;font-size:12.5px;color:#000;">OVV</div>
<div class="t" style="right:1068px;top:658.92px;font-size:12.5px;color:#000;text-align:right;">119,106,764.14</div>
<div class="t" style="right:920px;top:658.92px;font-size:12.5px;color:#000;text-align:right;">0</div>
<div class="t" style="right:772px;top:658.92px;font-size:12.5px;color:#000;text-align:right;">-64,393,056.35</div>
<div class="t" style="right:600px;top:658.92px;font-size:12.5px;color:#000;text-align:right;">0</div>
<div class="t" style="right:428px;top:658.92px;font-size:12.5px;color:#000;text-align:right;">-1,702,202.33</div>
<div class="t" style="right:268px;top:658.92px;font-size:12.5px;color:#000;text-align:right;">53,011,505.46</div>
<div class="a" style="left:166px;top:655px;width:1px;height:21px;background:#f2f2f2;"></div>
<div class="a" style="left:278px;top:655px;width:1px;height:21px;background:#f2f2f2;"></div>
<div class="a" style="left:390px;top:655px;width:1px;height:21px;background:#f2f2f2;"></div>
<div class="a" style="left:538px;top:655px;width:1px;height:21px;background:#f2f2f2;"></div>
<div class="a" style="left:686px;top:655px;width:1px;height:21px;background:#f2f2f2;"></div>
<div class="a" style="left:834px;top:655px;width:1px;height:21px;background:#f2f2f2;"></div>
<div class="a" style="left:1006px;top:655px;width:1px;height:21px;background:#f2f2f2;"></div>
<div class="a" style="left:1178px;top:655px;width:1px;height:21px;background:#f2f2f2;"></div>
<div class="a" style="left:1338px;top:655px;width:1px;height:21px;background:#f2f2f2;"></div>
<div class="a" style="left:78px;top:676px;width:1260px;height:20px;background:#ffffff;"></div>
<div class="a" style="left:49px;top:676px;width:29px;height:20px;background:#f7f7f7;"></div>
<div class="a" style="left:49px;top:696px;width:29px;height:1px;background:#6e6e6e;"></div>
<div class="a" style="left:78px;top:696px;width:1480px;height:1px;background:#f4f4f4;"></div>
<div class="t" style="left:53px;top:679.92px;font-size:12.5px;color:#000;">4</div>
<div class="t" style="left:84px;top:679.92px;font-size:12.5px;color:#000;">2022</div>
<div class="t" style="left:172px;top:679.92px;font-size:12.5px;color:#000;">HLM</div>
<div class="t" style="left:284px;top:679.92px;font-size:12.5px;color:#000;"><span style="font-size:12px">海澜优选</span></div>
<div class="t" style="right:1068px;top:679.92px;font-size:12.5px;color:#000;text-align:right;">61,616,744.12</div>
<div class="t" style="right:920px;top:679.92px;font-size:12.5px;color:#000;text-align:right;">0</div>
<div class="t" style="right:772px;top:679.92px;font-size:12.5px;color:#000;text-align:right;">-14,720,829.32</div>
<div class="t" style="right:600px;top:679.92px;font-size:12.5px;color:#000;text-align:right;">0</div>
<div class="t" style="right:428px;top:679.92px;font-size:12.5px;color:#000;text-align:right;">-147,662.21</div>
<div class="t" style="right:268px;top:679.92px;font-size:12.5px;color:#000;text-align:right;">46,748,252.59</div>
<div class="a" style="left:166px;top:676px;width:1px;height:21px;background:#f2f2f2;"></div>
<div class="a" style="left:278px;top:676px;width:1px;height:21px;background:#f2f2f2;"></div>
<div class="a" style="left:390px;top:676px;width:1px;height:21px;background:#f2f2f2;"></div>
<div class="a" style="left:538px;top:676px;width:1px;height:21px;background:#f2f2f2;"></div>
<div class="a" style="left:686px;top:676px;width:1px;height:21px;background:#f2f2f2;"></div>
<div class="a" style="left:834px;top:676px;width:1px;height:21px;background:#f2f2f2;"></div>
<div class="a" style="left:1006px;top:676px;width:1px;height:21px;background:#f2f2f2;"></div>
<div class="a" style="left:1178px;top:676px;width:1px;height:21px;background:#f2f2f2;"></div>
<div class="a" style="left:1338px;top:676px;width:1px;height:21px;background:#f2f2f2;"></div>
<div class="a" style="left:78px;top:697px;width:1260px;height:20px;background:#dfeaf6;"></div>
<div class="a" style="left:49px;top:697px;width:29px;height:20px;background:#f7f7f7;"></div>
<div class="a" style="left:49px;top:717px;width:29px;height:1px;background:#6e6e6e;"></div>
<div class="a" style="left:78px;top:717px;width:1480px;height:1px;background:#f4f4f4;"></div>
<div class="t" style="left:53px;top:700.92px;font-size:12.5px;color:#000;">5</div>
<div class="t" style="left:84px;top:700.92px;font-size:12.5px;color:#000;">2022</div>
<div class="t" style="left:172px;top:700.92px;font-size:12.5px;color:#000;">NCL</div>
<div class="t" style="left:284px;top:700.92px;font-size:12.5px;color:#000;"><span style="font-size:12px">男生女生</span></div>
<div class="t" style="right:1068px;top:700.92px;font-size:12.5px;color:#000;text-align:right;">56,798,110.46</div>
<div class="t" style="right:920px;top:700.92px;font-size:12.5px;color:#000;text-align:right;">12,162.26</div>
<div class="t" style="right:772px;top:700.92px;font-size:12.5px;color:#000;text-align:right;">-10,280,020.42</div>
<div class="t" style="right:600px;top:700.92px;font-size:12.5px;color:#000;text-align:right;">0</div>
<div class="t" style="right:428px;top:700.92px;font-size:12.5px;color:#000;text-align:right;">-402,623.89</div>
<div class="t" style="right:268px;top:700.92px;font-size:12.5px;color:#000;text-align:right;">46,127,628.41</div>
<div class="a" style="left:166px;top:697px;width:1px;height:21px;background:#f2f2f2;"></div>
<div class="a" style="left:278px;top:697px;width:1px;height:21px;background:#f2f2f2;"></div>
<div class="a" style="left:390px;top:697px;width:1px;height:21px;background:#f2f2f2;"></div>
<div class="a" style="left:538px;top:697px;width:1px;height:21px;background:#f2f2f2;"></div>
<div class="a" style="left:686px;top:697px;width:1px;height:21px;background:#f2f2f2;"></div>
<div class="a" style="left:834px;top:697px;width:1px;height:21px;background:#f2f2f2;"></div>
<div class="a" style="left:1006px;top:697px;width:1px;height:21px;background:#f2f2f2;"></div>
<div class="a" style="left:1178px;top:697px;width:1px;height:21px;background:#f2f2f2;"></div>
<div class="a" style="left:1338px;top:697px;width:1px;height:21px;background:#f2f2f2;"></div>
<div class="a" style="left:78px;top:718px;width:1260px;height:20px;background:#ffffff;"></div>
<div class="a" style="left:49px;top:718px;width:29px;height:20px;background:#f7f7f7;"></div>
<div class="a" style="left:49px;top:738px;width:29px;height:1px;background:#6e6e6e;"></div>
<div class="a" style="left:78px;top:738px;width:1480px;height:1px;background:#f4f4f4;"></div>
<div class="t" style="left:53px;top:721.92px;font-size:12.5px;color:#000;">6</div>
<div class="t" style="left:84px;top:721.92px;font-size:12.5px;color:#000;">2022</div>
<div class="t" style="left:172px;top:721.92px;font-size:12.5px;color:#000;">HJS</div>
<div class="t" style="left:284px;top:721.92px;font-size:12.5px;color:#000;"><span style="font-size:12px">黑鲸</span></div>
<div class="t" style="right:1068px;top:721.92px;font-size:12.5px;color:#000;text-align:right;">7,414,532.46</div>
<div class="t" style="right:920px;top:721.92px;font-size:12.5px;color:#000;text-align:right;">76</div>
<div class="t" style="right:772px;top:721.92px;font-size:12.5px;color:#000;text-align:right;">-2,095,158.48</div>
<div class="t" style="right:600px;top:721.92px;font-size:12.5px;color:#000;text-align:right;">0</div>
<div class="t" style="right:428px;top:721.92px;font-size:12.5px;color:#000;text-align:right;">-387,646.15</div>
<div class="t" style="right:268px;top:721.92px;font-size:12.5px;color:#000;text-align:right;">4,931,803.83</div>
<div class="a" style="left:166px;top:718px;width:1px;height:21px;background:#f2f2f2;"></div>
<div class="a" style="left:278px;top:718px;width:1px;height:21px;background:#f2f2f2;"></div>
<div class="a" style="left:390px;top:718px;width:1px;height:21px;background:#f2f2f2;"></div>
<div class="a" style="left:538px;top:718px;width:1px;height:21px;background:#f2f2f2;"></div>
<div class="a" style="left:686px;top:718px;width:1px;height:21px;background:#f2f2f2;"></div>
<div class="a" style="left:834px;top:718px;width:1px;height:21px;background:#f2f2f2;"></div>
<div class="a" style="left:1006px;top:718px;width:1px;height:21px;background:#f2f2f2;"></div>
<div class="a" style="left:1178px;top:718px;width:1px;height:21px;background:#f2f2f2;"></div>
<div class="a" style="left:1338px;top:718px;width:1px;height:21px;background:#f2f2f2;"></div>
<div class="a" style="left:78px;top:739px;width:1260px;height:20px;background:#dfeaf6;"></div>
<div class="a" style="left:49px;top:739px;width:29px;height:20px;background:#f7f7f7;"></div>
<div class="a" style="left:49px;top:759px;width:29px;height:1px;background:#6e6e6e;"></div>
<div class="a" style="left:78px;top:759px;width:1480px;height:1px;background:#f4f4f4;"></div>
<div class="t" style="left:53px;top:742.92px;font-size:12.5px;color:#000;">7</div>
<div class="t" style="left:84px;top:742.92px;font-size:12.5px;color:#000;">2022</div>
<div class="t" style="left:172px;top:742.92px;font-size:12.5px;color:#000;">BES</div>
<div class="t" style="left:284px;top:742.92px;font-size:12.5px;color:#000;"><span style="font-size:12px">海一家</span></div>
<div class="t" style="right:1068px;top:742.92px;font-size:12.5px;color:#000;text-align:right;">4,038,537.99</div>
<div class="t" style="right:920px;top:742.92px;font-size:12.5px;color:#000;text-align:right;">0</div>
<div class="t" style="right:772px;top:742.92px;font-size:12.5px;color:#000;text-align:right;">-499,314.27</div>
<div class="t" style="right:600px;top:742.92px;font-size:12.5px;color:#000;text-align:right;">0</div>
<div class="t" style="right:428px;top:742.92px;font-size:12.5px;color:#000;text-align:right;">2,504.83</div>
<div class="t" style="right:268px;top:742.92px;font-size:12.5px;color:#000;text-align:right;">3,541,728.55</div>
<div class="a" style="left:166px;top:739px;width:1px;height:21px;background:#f2f2f2;"></div>
<div class="a" style="left:278px;top:739px;width:1px;height:21px;background:#f2f2f2;"></div>
<div class="a" style="left:390px;top:739px;width:1px;height:21px;background:#f2f2f2;"></div>
<div class="a" style="left:538px;top:739px;width:1px;height:21px;background:#f2f2f2;"></div>
<div class="a" style="left:686px;top:739px;width:1px;height:21px;background:#f2f2f2;"></div>
<div class="a" style="left:834px;top:739px;width:1px;height:21px;background:#f2f2f2;"></div>
<div class="a" style="left:1006px;top:739px;width:1px;height:21px;background:#f2f2f2;"></div>
<div class="a" style="left:1178px;top:739px;width:1px;height:21px;background:#f2f2f2;"></div>
<div class="a" style="left:1338px;top:739px;width:1px;height:21px;background:#f2f2f2;"></div>
<div class="a" style="left:78px;top:760px;width:1260px;height:20px;background:#ffffff;"></div>
<div class="a" style="left:49px;top:760px;width:29px;height:20px;background:#f7f7f7;"></div>
<div class="a" style="left:49px;top:780px;width:29px;height:1px;background:#6e6e6e;"></div>
<div class="a" style="left:78px;top:780px;width:1480px;height:1px;background:#f4f4f4;"></div>
<div class="t" style="left:53px;top:763.92px;font-size:12.5px;color:#000;">8</div>
<div class="t" style="left:84px;top:763.92px;font-size:12.5px;color:#000;">2022</div>
<div class="t" style="left:172px;top:763.92px;font-size:12.5px;color:#000;">HLP</div>
<div class="t" style="left:284px;top:763.92px;font-size:12.5px;color:#000;">HLA PLUS</div>
<div class="t" style="right:1068px;top:763.92px;font-size:12.5px;color:#000;text-align:right;">1,196,271.26</div>
<div class="t" style="right:920px;top:763.92px;font-size:12.5px;color:#000;text-align:right;">0</div>
<div class="t" style="right:772px;top:763.92px;font-size:12.5px;color:#000;text-align:right;">-491,511.38</div>
<div class="t" style="right:600px;top:763.92px;font-size:12.5px;color:#000;text-align:right;">0</div>
<div class="t" style="right:428px;top:763.92px;font-size:12.5px;color:#000;text-align:right;">-3,965.99</div>
<div class="t" style="right:268px;top:763.92px;font-size:12.5px;color:#000;text-align:right;">700,793.89</div>
<div class="a" style="left:166px;top:760px;width:1px;height:21px;background:#f2f2f2;"></div>
<div class="a" style="left:278px;top:760px;width:1px;height:21px;background:#f2f2f2;"></div>
<div class="a" style="left:390px;top:760px;width:1px;height:21px;background:#f2f2f2;"></div>
<div class="a" style="left:538px;top:760px;width:1px;height:21px;background:#f2f2f2;"></div>
<div class="a" style="left:686px;top:760px;width:1px;height:21px;background:#f2f2f2;"></div>
<div class="a" style="left:834px;top:760px;width:1px;height:21px;background:#f2f2f2;"></div>
<div class="a" style="left:1006px;top:760px;width:1px;height:21px;background:#f2f2f2;"></div>
<div class="a" style="left:1178px;top:760px;width:1px;height:21px;background:#f2f2f2;"></div>
<div class="a" style="left:1338px;top:760px;width:1px;height:21px;background:#f2f2f2;"></div>
<div class="a" style="left:78px;top:781px;width:1260px;height:20px;background:#dfeaf6;"></div>
<div class="a" style="left:49px;top:781px;width:29px;height:20px;background:#f7f7f7;"></div>
<div class="a" style="left:49px;top:801px;width:29px;height:1px;background:#6e6e6e;"></div>
<div class="a" style="left:78px;top:801px;width:1480px;height:1px;background:#f4f4f4;"></div>
<div class="t" style="left:53px;top:784.92px;font-size:12.5px;color:#000;">9</div>
<div class="t" style="left:84px;top:784.92px;font-size:12.5px;color:#000;">2022</div>
<div class="t" style="left:172px;top:784.92px;font-size:12.5px;color:#000;">HED</div>
<div class="t" style="left:284px;top:784.92px;font-size:12.5px;color:#000;">HEAD</div>
<div class="t" style="right:1068px;top:784.92px;font-size:12.5px;color:#000;text-align:right;">392,584.34</div>
<div class="t" style="right:920px;top:784.92px;font-size:12.5px;color:#000;text-align:right;">0</div>
<div class="t" style="right:772px;top:784.92px;font-size:12.5px;color:#000;text-align:right;">-35,940.01</div>
<div class="t" style="right:600px;top:784.92px;font-size:12.5px;color:#000;text-align:right;">0</div>
<div class="t" style="right:428px;top:784.92px;font-size:12.5px;color:#000;text-align:right;">-27,662.23</div>
<div class="t" style="right:268px;top:784.92px;font-size:12.5px;color:#000;text-align:right;">328,982.1</div>
<div class="a" style="left:166px;top:781px;width:1px;height:21px;background:#f2f2f2;"></div>
<div class="a" style="left:278px;top:781px;width:1px;height:21px;background:#f2f2f2;"></div>
<div class="a" style="left:390px;top:781px;width:1px;height:21px;background:#f2f2f2;"></div>
<div class="a" style="left:538px;top:781px;width:1px;height:21px;background:#f2f2f2;"></div>
<div class="a" style="left:686px;top:781px;width:1px;height:21px;background:#f2f2f2;"></div>
<div class="a" style="left:834px;top:781px;width:1px;height:21px;background:#f2f2f2;"></div>
<div class="a" style="left:1006px;top:781px;width:1px;height:21px;background:#f2f2f2;"></div>
<div class="a" style="left:1178px;top:781px;width:1px;height:21px;background:#f2f2f2;"></div>
<div class="a" style="left:1338px;top:781px;width:1px;height:21px;background:#f2f2f2;"></div>
<div class="a" style="left:78px;top:612px;width:1px;height:189px;background:#6e6e6e;"></div>
<div class="a" style="left:78px;top:613px;width:88px;height:20px;background:#6aaae3;border:2px solid #1a1a1a"></div>
<div class="t" style="left:84px;top:616.92px;font-size:12.5px;color:#fff;">2022</div>
<div class="a" style="left:1558px;top:584px;width:15px;height:217px;background:#f7f7f7;"></div>
<svg class="a" style="left:1561px;top:590px;" width="9" height="6" viewBox="0 0 9 6"><path d="M1 5L4.5 1.5L8 5" fill="none" stroke="#444" stroke-width="1.8"/></svg>
<div class="a" style="left:1558px;top:601px;width:15px;height:39px;background:#cdcdcd;"></div>
<svg class="a" style="left:1561px;top:791px;" width="9" height="6" viewBox="0 0 9 6"><path d="M1 1L4.5 4.5L8 1" fill="none" stroke="#444" stroke-width="1.8"/></svg>
<svg class="a" style="left:1579px;top:592px;" width="16" height="16" viewBox="0 0 16 16"><rect x="4" y="1" width="11" height="11" fill="#1c8ad3"/><rect x="6" y="3" width="7" height="7" fill="#7ec3f0"/><rect x="1" y="8" width="6" height="7" fill="#fff"/><circle cx="4" cy="11.5" r="2.3" fill="#1c8ad3"/></svg>
<div class="t" style="left:1575px;top:615px;width:24px;font-size:12px;transform:rotate(90deg);text-align:center">面板</div>
<svg class="a" style="left:1578px;top:651px;" width="15" height="15" viewBox="0 0 15 15"><rect x="0.8" y="0.8" width="13" height="13" fill="#fff" stroke="#1c8ad3" stroke-width="1.3"/><path d="M2 3H4V5H2ZM6 3H8V5H6ZM10 3H12V5H10ZM4 5H6V7H4ZM8 5H10V7H8ZM2 7H4V9H2ZM6 7H8V9H6ZM10 7H12V9H10ZM4 9H6V11H4ZM8 9H10V11H8Z" fill="#7ec3f0"/><path d="M0.8 11H14" stroke="#1c8ad3" stroke-width="1.2"/></svg>
<svg class="a" style="left:1578px;top:672px;" width="15" height="15" viewBox="0 0 15 15"><circle cx="7.5" cy="7.5" r="6.5" fill="none" stroke="#1c8ad3" stroke-width="1.3"/><circle cx="5.3" cy="5.3" r="1.1" fill="#1c8ad3"/><circle cx="9.7" cy="5.3" r="1.1" fill="#1c8ad3"/><circle cx="5.3" cy="9.7" r="1.1" fill="#1c8ad3"/><circle cx="9.7" cy="9.7" r="1.1" fill="#1c8ad3"/></svg>
<svg class="a" style="left:1578px;top:694px;" width="15" height="16" viewBox="0 0 15 16"><rect x="0.8" y="5" width="13" height="10" fill="#fff" stroke="#1c8ad3" stroke-width="1.3"/><path d="M0.8 8.3H14M0.8 11.6H14M5 5V15M9.5 5V15" stroke="#f08c14" stroke-width="1.1"/><path d="M7.2 0.5V4.5M5.2 2.5H9.2" stroke="#f08c14" stroke-width="1.2"/></svg>
<svg class="a" style="left:1578px;top:716px;" width="15" height="15" viewBox="0 0 15 15"><rect x="0.8" y="0.8" width="13" height="11" fill="none" stroke="#1c8ad3" stroke-width="1.3"/><rect x="0.8" y="0.8" width="13" height="3.5" fill="#1c8ad3"/><rect x="2" y="5" width="7" height="5" fill="#7ec3f0"/><path d="M9 13.5H14.5M10 12V15M14 12V15" stroke="#1c8ad3" stroke-width="1"/></svg>
<svg class="a" style="left:1578px;top:738px;" width="15" height="15" viewBox="0 0 15 15"><circle cx="3.5" cy="3.5" r="2.8" fill="#1c8ad3"/><circle cx="11.5" cy="3.5" r="2.8" fill="#1c8ad3"/><circle cx="3.5" cy="11.5" r="2.8" fill="#1c8ad3"/><circle cx="11.5" cy="11.5" r="2.8" fill="#f08c14"/><path d="M2 3.5H5M10 3.5H13M11.5 2V5M10 11H13M10 12.3H13M2.2 10.2L4.8 12.8M4.8 10.2L2.2 12.8" stroke="#fff" stroke-width="0.9"/></svg>
<svg class="a" style="left:1577px;top:815px;" width="17" height="17" viewBox="0 0 17 17"><rect x="1" y="1" width="5" height="14" rx="2.2" fill="#1289d0"/><rect x="7" y="10.5" width="8" height="4.5" rx="1.8" fill="#1289d0"/><path d="M8.2 3.2Q13.3 3.2 13.3 8.5" fill="none" stroke="#1289d0" stroke-width="1.4"/><path d="M10.5 0.8L7.6 3.2L10.5 5.6" fill="none" stroke="#1289d0" stroke-width="1.3"/></svg>
<svg class="a" style="left:59px;top:808px;" width="16" height="17" viewBox="0 0 16 17"><g transform="rotate(50 8 8.5)"><path d="M2.8 11Q0.8 7 4.5 5.6Q7 4.6 9.2 5" fill="none" stroke="#1289d0" stroke-width="1.8"/><path d="M8.2 1.5L12.3 5.3L8.5 8.5Z" fill="#1289d0"/><path d="M13.2 6Q15.2 10 11.5 11.4Q9 12.4 6.8 12" fill="none" stroke="#1289d0" stroke-width="1.8"/><path d="M7.8 15.5L3.7 11.7L7.5 8.5Z" fill="#1289d0"/></g></svg>
<div class="t" style="left:79px;top:811.42px;font-size:12.5px;color:#000;"><span style="font-size:12px">刷新</span></div>
<svg class="a" style="left:117px;top:815px;" width="8" height="5" viewBox="0 0 8 5"><path d="M0 0H8L4 4.5Z" fill="#222"/></svg>
<svg class="a" style="left:135px;top:810px;" width="2" height="14" viewBox="0 0 2 14"><rect x="0" y="0.0" width="2" height="2" fill="#bfb29a"/><rect x="0" y="3.4" width="2" height="2" fill="#bfb29a"/><rect x="0" y="6.8" width="2" height="2" fill="#bfb29a"/><rect x="0" y="10.2" width="2" height="2" fill="#bfb29a"/></svg>
<svg class="a" style="left:145px;top:809px;" width="15" height="15" viewBox="0 0 15 15"><circle cx="7.5" cy="7.5" r="6.5" fill="none" stroke="#a6a6a6" stroke-width="1.2"/><path d="M4 7.5L6.5 10L11 5" fill="none" stroke="#a6a6a6" stroke-width="1.3"/></svg>
<div class="t" style="left:166px;top:811.42px;font-size:12.5px;color:#a0a0a0;"><span style="font-size:12px">保存</span></div>
<svg class="a" style="left:203px;top:815px;" width="8" height="5" viewBox="0 0 8 5"><path d="M0 0H8L4 4.5Z" fill="#888"/></svg>
<svg class="a" style="left:221px;top:810px;" width="13" height="13" viewBox="0 0 13 13"><rect x="0.6" y="0.6" width="11.5" height="11.5" fill="none" stroke="#a6a6a6" stroke-width="1.1"/><path d="M3 3L9.5 9.5M9.5 3L3 9.5" stroke="#a6a6a6" stroke-width="1"/></svg>
<div class="t" style="left:238px;top:811.42px;font-size:12.5px;color:#a0a0a0;"><span style="font-size:12px">取消</span></div>
<div class="a" style="left:273px;top:804px;width:1px;height:26px;background:#7a7a7a;"></div>
<svg class="a" style="left:284px;top:810px;" width="16" height="15" viewBox="0 0 16 15"><path d="M1 1.5H14M1 5.5H11M1 9.5H7M1 13.5H6" stroke="#1c8ad3" stroke-width="1.6"/><path d="M8 14L14.5 8" stroke="#1c8ad3" stroke-width="2"/></svg>
<svg class="a" style="left:308px;top:810px;" width="16" height="15" viewBox="0 0 16 15"><path d="M1 1.5H14M1 5.5H8M1 9.5H8M1 13.5H8M12 6V14M8 10H15.5" stroke="#999" stroke-width="1.6"/></svg>
<svg class="a" style="left:332px;top:810px;" width="16" height="15" viewBox="0 0 16 15"><path d="M1 1.5H14M1 5.5H3M1 9.5H3M1 13.5H3" stroke="#999" stroke-width="1.6"/><circle cx="9.5" cy="9.5" r="4.8" fill="none" stroke="#999" stroke-width="1"/><path d="M9.5 7V12M7 9.5H12" stroke="#999" stroke-width="1.2"/></svg>
<svg class="a" style="left:356px;top:810px;" width="16" height="15" viewBox="0 0 16 15"><path d="M1 1.5H14M1 5.5H8M1 9.5H6M8 9.5H14M1 13.5H8" stroke="#999" stroke-width="1.6"/></svg>
<svg class="a" style="left:380px;top:811px;" width="2" height="14" viewBox="0 0 2 14"><rect x="0" y="0.0" width="2" height="2" fill="#bfb29a"/><rect x="0" y="3.4" width="2" height="2" fill="#bfb29a"/><rect x="0" y="6.8" width="2" height="2" fill="#bfb29a"/><rect x="0" y="10.2" width="2" height="2" fill="#bfb29a"/></svg>
<svg class="a" style="left:386px;top:809px;" width="14" height="16" viewBox="0 0 14 16"><path d="M1.5 1V15" stroke="#999" stroke-width="1.8"/><path d="M12 1.5L5 8L12 14.5" fill="none" stroke="#999" stroke-width="1.8"/></svg>
<svg class="a" style="left:411px;top:809px;" width="10" height="16" viewBox="0 0 10 16"><path d="M8.5 1.5L2 8L8.5 14.5" fill="none" stroke="#999" stroke-width="1.8"/></svg>
<svg class="a" style="left:436px;top:809px;" width="10" height="16" viewBox="0 0 10 16"><path d="M1.5 1.5L8 8L1.5 14.5" fill="none" stroke="#1c8ad3" stroke-width="1.8"/></svg>
<svg class="a" style="left:457px;top:809px;" width="14" height="16" viewBox="0 0 14 16"><path d="M12.5 1V15" stroke="#1c8ad3" stroke-width="1.8"/><path d="M2 1.5L9 8L2 14.5" fill="none" stroke="#1c8ad3" stroke-width="1.8"/></svg>
<svg class="a" style="left:479px;top:810px;" width="15" height="15" viewBox="0 0 15 15"><path d="M1 4V1H4M11 1H14V4M14 11V14H11M4 14H1V11" fill="none" stroke="#aaa" stroke-width="1.2"/><path d="M5 4H8.5L10 5.5V11H5Z" fill="none" stroke="#aaa" stroke-width="1"/></svg>
<svg class="a" style="left:503px;top:811px;" width="2" height="14" viewBox="0 0 2 14"><rect x="0" y="0.0" width="2" height="2" fill="#bfb29a"/><rect x="0" y="3.4" width="2" height="2" fill="#bfb29a"/><rect x="0" y="6.8" width="2" height="2" fill="#bfb29a"/><rect x="0" y="10.2" width="2" height="2" fill="#bfb29a"/></svg>
<svg class="a" style="left:516px;top:809px;" width="16" height="16" viewBox="0 0 16 16"><path d="M1 9V14.5H15V9" fill="none" stroke="#1c8ad3" stroke-width="1.4"/><path d="M8 12V2M4.5 5L8 1.5L11.5 5" fill="none" stroke="#1c8ad3" stroke-width="1.6"/></svg>
<div class="t" style="left:536px;top:811.42px;font-size:12.5px;color:#000;"><span style="font-size:12px">导出数据</span>...</div>
<svg class="a" style="left:607px;top:815px;" width="8" height="5" viewBox="0 0 8 5"><path d="M0 0H8L4 4.5Z" fill="#222"/></svg>
<svg class="a" style="left:625px;top:811px;" width="2" height="14" viewBox="0 0 2 14"><rect x="0" y="0.0" width="2" height="2" fill="#bfb29a"/><rect x="0" y="3.4" width="2" height="2" fill="#bfb29a"/><rect x="0" y="6.8" width="2" height="2" fill="#bfb29a"/><rect x="0" y="10.2" width="2" height="2" fill="#bfb29a"/></svg>
<svg class="a" style="left:631px;top:809px;" width="16" height="16" viewBox="0 0 16 16"><path d="M8 0.8L9.6 2.6L12 2.2L12.5 4.7L14.8 6L13.6 8L14.8 10L12.5 11.3L12 13.8L9.6 13.4L8 15.2L6.4 13.4L4 13.8L3.5 11.3L1.2 10L2.4 8L1.2 6L3.5 4.7L4 2.2L6.4 2.6Z" fill="#1c8ad3"/><path d="M8 5.5L10.5 8L8 10.5L5.5 8Z" fill="#cfe6f7"/></svg>
<div class="a" style="left:654px;top:806px;width:55px;height:23px;background:#fff;border:1px solid #7a7a7a"></div>
<div class="t" style="left:659px;top:812.42px;font-size:12.5px;color:#000;">200</div>
<svg class="a" style="left:714px;top:809px;" width="16" height="16" viewBox="0 0 16 16"><path d="M1 10V14.5H15V10" fill="none" stroke="#1c8ad3" stroke-width="1.4"/><path d="M2 1.5L8 7L14 1.5M8 7V11" fill="none" stroke="#1c8ad3" stroke-width="1.5"/></svg>
<div class="t" style="left:737px;top:811.42px;font-size:12.5px;color:#000;">45</div>
<svg class="a" style="left:759px;top:811px;" width="2" height="14" viewBox="0 0 2 14"><rect x="0" y="0.0" width="2" height="2" fill="#bfb29a"/><rect x="0" y="3.4" width="2" height="2" fill="#bfb29a"/><rect x="0" y="6.8" width="2" height="2" fill="#bfb29a"/><rect x="0" y="10.2" width="2" height="2" fill="#bfb29a"/></svg>
<div class="t" style="left:787px;top:810.69px;font-size:11px;color:#666;">···</div>
<div class="t" style="left:805px;top:811.42px;font-size:12.5px;color:#000;">45 <span style="font-size:12px">行已获取</span> - 17.809s (1ms <span style="font-size:12px">获取</span>), 2025-10-21 20:09:14</div>
<div class="a" style="left:0px;top:834px;width:1600px;height:25px;background:#f7f7f7;"></div>
<div class="a" style="left:778px;top:836px;width:1px;height:22px;background:#cfcfcf;"></div>
<div class="a" style="left:814px;top:836px;width:1px;height:22px;background:#cfcfcf;"></div>
<div class="a" style="left:841px;top:836px;width:1px;height:22px;background:#cfcfcf;"></div>
<div class="a" style="left:976px;top:836px;width:1px;height:22px;background:#cfcfcf;"></div>
<div class="a" style="left:1103px;top:836px;width:1px;height:22px;background:#cfcfcf;"></div>
<div class="a" style="left:1231px;top:836px;width:1px;height:22px;background:#cfcfcf;"></div>
<div class="t" style="left:786px;top:839.42px;font-size:12.5px;color:#000;">CST</div>
<div class="t" style="left:821px;top:839.42px;font-size:12.5px;color:#000;">zh</div>
<div class="t" style="left:849px;top:839.42px;font-size:12.5px;color:#000;"><span style="font-size:12px">可写</span></div>
<div class="t" style="left:983px;top:839.42px;font-size:12.5px;color:#000;"><span style="font-size:12px">智能插入</span></div>
<div class="t" style="left:1111px;top:839.42px;font-size:12.5px;color:#000;">376 : 1 : 15337</div>
<div class="t" style="left:1239px;top:839.42px;font-size:12.5px;color:#000;">Sel: 0 | 0</div>
<svg class="a" style="left:1316px;top:840px;" width="2" height="14" viewBox="0 0 2 14"><rect x="0" y="0.0" width="2" height="2" fill="#bfb29a"/><rect x="0" y="3.4" width="2" height="2" fill="#bfb29a"/><rect x="0" y="6.8" width="2" height="2" fill="#bfb29a"/><rect x="0" y="10.2" width="2" height="2" fill="#bfb29a"/></svg>
<div class="a" style="left:0px;top:859px;width:1600px;height:1px;background:#ffffff;"></div>
<div class="a" style="left:0px;top:860px;width:1600px;height:40px;background:#000;"></div>
<svg class="a" style="left:16px;top:872px;" width="16" height="16" viewBox="0 0 16 16"><path d="M0 2.2L6.5 1.3V7.6H0ZM7.4 1.2L16 0V7.6H7.4ZM0 8.4H6.5V14.7L0 13.8ZM7.4 8.4H16V16L7.4 14.8Z" fill="#fff"/></svg>
<svg class="a" style="left:63px;top:871px;" width="18" height="18" viewBox="0 0 18 18"><circle cx="10.5" cy="7" r="5.5" fill="none" stroke="#fff" stroke-width="1.3"/><path d="M6.5 11L1 16.5" stroke="#fff" stroke-width="1.5"/></svg>
<svg class="a" style="left:110px;top:871px;" width="18" height="18" viewBox="0 0 18 18"><rect x="1" y="4" width="12" height="10" fill="none" stroke="#fff" stroke-width="1.2"/><path d="M3 1.5H11M3 16.5H11M15.5 3V15" stroke="#fff" stroke-width="1.2"/></svg>
<svg class="a" style="left:160px;top:867px;" width="26" height="26" viewBox="0 0 26 26"><path d="M4 14Q4 6 13 5Q21 5 22 13V15H8Q9 20 14 20Q18 20 20 17H22Q20 23 13 23Q4 22 4 14ZM8 11.5H18Q17 8 13 8Q9 8 8 11.5Z" fill="#1ea0e8"/><path d="M3 20Q0 25 6 23Q18 17 24 5Q26 1 20 3" fill="none" stroke="#f4b400" stroke-width="1.6"/></svg>
<svg class="a" style="left:208px;top:868px;" width="24" height="24" viewBox="0 0 24 24"><path d="M1 4H9L11 6H23V20H1Z" fill="#f5c542"/><path d="M1 8H23V20H1Z" fill="#ffd867"/><rect x="9" y="15" width="6" height="5" fill="#1e90e0"/></svg>
<svg class="a" style="left:256px;top:867px;" width="26" height="26" viewBox="0 0 26 26"><g transform="scale(1.0)"><circle cx="13" cy="13" r="11.3" fill="#fff" stroke="#45b8c0" stroke-width="2.2"/><path d="M8.5 22.5Q9.5 16.5 13.5 17.8Q15.5 18.8 16.5 16.2L18.2 18.5Q17.5 21.5 16.5 23.8Q12.5 25.2 8.5 22.5Z" fill="#3a2a22"/><ellipse cx="17.2" cy="9" rx="2.3" ry="1.4" fill="#3a2a22"/><circle cx="11.8" cy="8.9" r="0.9" fill="#3a2a22"/><path d="M5.6 15Q5.5 10 7.6 9.5" fill="none" stroke="#3a2a22" stroke-width="1.2"/><path d="M8 7.5Q10.5 4.8 15 5.2" fill="none" stroke="#bbb" stroke-width="0.8"/></g></svg>
<div class="a" style="left:294px;top:860px;width:48px;height:40px;background:#333;"></div>
<div class="a" style="left:294px;top:897px;width:48px;height:3px;background:#76b9ed;"></div>
<svg class="a" style="left:305px;top:867px;" width="26" height="26" viewBox="0 0 26 26"><g transform="scale(1.0)"><circle cx="13" cy="13" r="11.3" fill="#fff" stroke="#45b8c0" stroke-width="2.2"/><path d="M8.5 22.5Q9.5 16.5 13.5 17.8Q15.5 18.8 16.5 16.2L18.2 18.5Q17.5 21.5 16.5 23.8Q12.5 25.2 8.5 22.5Z" fill="#3a2a22"/><ellipse cx="17.2" cy="9" rx="2.3" ry="1.4" fill="#3a2a22"/><circle cx="11.8" cy="8.9" r="0.9" fill="#3a2a22"/><path d="M5.6 15Q5.5 10 7.6 9.5" fill="none" stroke="#3a2a22" stroke-width="1.2"/><path d="M8 7.5Q10.5 4.8 15 5.2" fill="none" stroke="#bbb" stroke-width="0.8"/></g></svg>
<svg class="a" style="left:1347px;top:874px;" width="14" height="9" viewBox="0 0 14 9"><path d="M1 8L7 2L13 8" fill="none" stroke="#fff" stroke-width="1.3"/></svg>
<svg class="a" style="left:1372px;top:871px;" width="14" height="18" viewBox="0 0 14 18"><rect x="3" y="1" width="6" height="5" fill="none" stroke="#fff" stroke-width="1"/><rect x="1.5" y="6" width="9" height="11" fill="none" stroke="#fff" stroke-width="1.1"/><path d="M9 16L11 18L14 14" fill="none" stroke="#fff" stroke-width="0.8"/></svg>
<svg class="a" style="left:1393px;top:872px;" width="18" height="16" viewBox="0 0 18 16"><rect x="3" y="3" width="14" height="9" fill="none" stroke="#fff" stroke-width="1.1"/><path d="M10 12V15M6 15.5H14" stroke="#fff" stroke-width="1.1"/><rect x="0.5" y="1" width="5" height="4" fill="#000" stroke="#fff" stroke-width="0.9"/></svg>
<svg class="a" style="left:1417px;top:871px;" width="18" height="18" viewBox="0 0 18 18"><path d="M1 6.5H4L8 3V15L4 11.5H1Z" fill="none" stroke="#fff" stroke-width="1.1"/><path d="M10.5 6.5Q12 9 10.5 11.5M12.8 4.5Q15.5 9 12.8 13.5M15 2.5Q19 9 15 15.5" fill="none" stroke="#fff" stroke-width="1.1"/></svg>
<div class="t" style="left:1443px;top:874.42px;font-size:12.5px;color:#fff;">ENG</div>
<div class="t" style="left:1494px;top:865.00px;font-size:13px;color:#fff;">20:09</div>
<div class="t" style="left:1476px;top:882.00px;font-size:13px;color:#fff;">2025/10/21</div>
<svg class="a" style="left:1558px;top:871px;" width="18" height="17" viewBox="0 0 18 17"><path d="M1 1H17V12H10L7 15.5V12H1Z" fill="none" stroke="#fff" stroke-width="1.2"/></svg>
<div class="a" style="left:1596px;top:860px;width:1px;height:40px;background:#555;"></div>
<svg class="a" style="left:0;top:0;pointer-events:none" width="1600" height="900"><g font-family="Liberation Sans" font-size="21.5" fill="#000" fill-opacity="0.11" stroke="#000" stroke-opacity="0.05" stroke-width="0.4"><g transform="translate(156.5,157.5) rotate(-45)"><text x="0" y="-12" dominant-baseline="central" text-anchor="middle">audit审计01(Audit1)</text><text x="0" y="13" dominant-baseline="central" text-anchor="middle">audit-172.18.210.237</text></g><g transform="translate(456.5,157.5) rotate(-45)"><text x="0" y="-12" dominant-baseline="central" text-anchor="middle">audit审计01(Audit1)</text><text x="0" y="13" dominant-baseline="central" text-anchor="middle">audit-172.18.210.237</text></g><g transform="translate(756.5,157.5) rotate(-45)"><text x="0" y="-12" dominant-baseline="central" text-anchor="middle">audit审计01(Audit1)</text><text x="0" y="13" dominant-baseline="central" text-anchor="middle">audit-172.18.210.237</text></g><g transform="translate(1056.5,157.5) rotate(-45)"><text x="0" y="-12" dominant-baseline="central" text-anchor="middle">audit审计01(Audit1)</text><text x="0" y="13" dominant-baseline="central" text-anchor="middle">audit-172.18.210.237</text></g><g transform="translate(1356.5,157.5) rotate(-45)"><text x="0" y="-12" dominant-baseline="central" text-anchor="middle">audit审计01(Audit1)</text><text x="0" y="13" dominant-baseline="central" text-anchor="middle">audit-172.18.210.237</text></g><g transform="translate(1656.5,157.5) rotate(-45)"><text x="0" y="-12" dominant-baseline="central" text-anchor="middle">audit审计01(Audit1)</text><text x="0" y="13" dominant-baseline="central" text-anchor="middle">audit-172.18.210.237</text></g><g transform="translate(156.5,457.5) rotate(-45)"><text x="0" y="-12" dominant-baseline="central" text-anchor="middle">audit审计01(Audit1)</text><text x="0" y="13" dominant-baseline="central" text-anchor="middle">audit-172.18.210.237</text></g><g transform="translate(456.5,457.5) rotate(-45)"><text x="0" y="-12" dominant-baseline="central" text-anchor="middle">audit审计01(Audit1)</text><text x="0" y="13" dominant-baseline="central" text-anchor="middle">audit-172.18.210.237</text></g><g transform="translate(756.5,457.5) rotate(-45)"><text x="0" y="-12" dominant-baseline="central" text-anchor="middle">audit审计01(Audit1)</text><text x="0" y="13" dominant-baseline="central" text-anchor="middle">audit-172.18.210.237</text></g><g transform="translate(1056.5,457.5) rotate(-45)"><text x="0" y="-12" dominant-baseline="central" text-anchor="middle">audit审计01(Audit1)</text><text x="0" y="13" dominant-baseline="central" text-anchor="middle">audit-172.18.210.237</text></g><g transform="translate(1356.5,457.5) rotate(-45)"><text x="0" y="-12" dominant-baseline="central" text-anchor="middle">audit审计01(Audit1)</text><text x="0" y="13" dominant-baseline="central" text-anchor="middle">audit-172.18.210.237</text></g><g transform="translate(1656.5,457.5) rotate(-45)"><text x="0" y="-12" dominant-baseline="central" text-anchor="middle">audit审计01(Audit1)</text><text x="0" y="13" dominant-baseline="central" text-anchor="middle">audit-172.18.210.237</text></g><g transform="translate(156.5,757.5) rotate(-45)"><text x="0" y="-12" dominant-baseline="central" text-anchor="middle">audit审计01(Audit1)</text><text x="0" y="13" dominant-baseline="central" text-anchor="middle">audit-172.18.210.237</text></g><g transform="translate(456.5,757.5) rotate(-45)"><text x="0" y="-12" dominant-baseline="central" text-anchor="middle">audit审计01(Audit1)</text><text x="0" y="13" dominant-baseline="central" text-anchor="middle">audit-172.18.210.237</text></g><g transform="translate(756.5,757.5) rotate(-45)"><text x="0" y="-12" dominant-baseline="central" text-anchor="middle">audit审计01(Audit1)</text><text x="0" y="13" dominant-baseline="central" text-anchor="middle">audit-172.18.210.237</text></g><g transform="translate(1056.5,757.5) rotate(-45)"><text x="0" y="-12" dominant-baseline="central" text-anchor="middle">audit审计01(Audit1)</text><text x="0" y="13" dominant-baseline="central" text-anchor="middle">audit-172.18.210.237</text></g><g transform="translate(1356.5,757.5) rotate(-45)"><text x="0" y="-12" dominant-baseline="central" text-anchor="middle">audit审计01(Audit1)</text><text x="0" y="13" dominant-baseline="central" text-anchor="middle">audit-172.18.210.237</text></g><g transform="translate(1656.5,757.5) rotate(-45)"><text x="0" y="-12" dominant-baseline="central" text-anchor="middle">audit审计01(Audit1)</text><text x="0" y="13" dominant-baseline="central" text-anchor="middle">audit-172.18.210.237</text></g></g></svg>
</body></html>
